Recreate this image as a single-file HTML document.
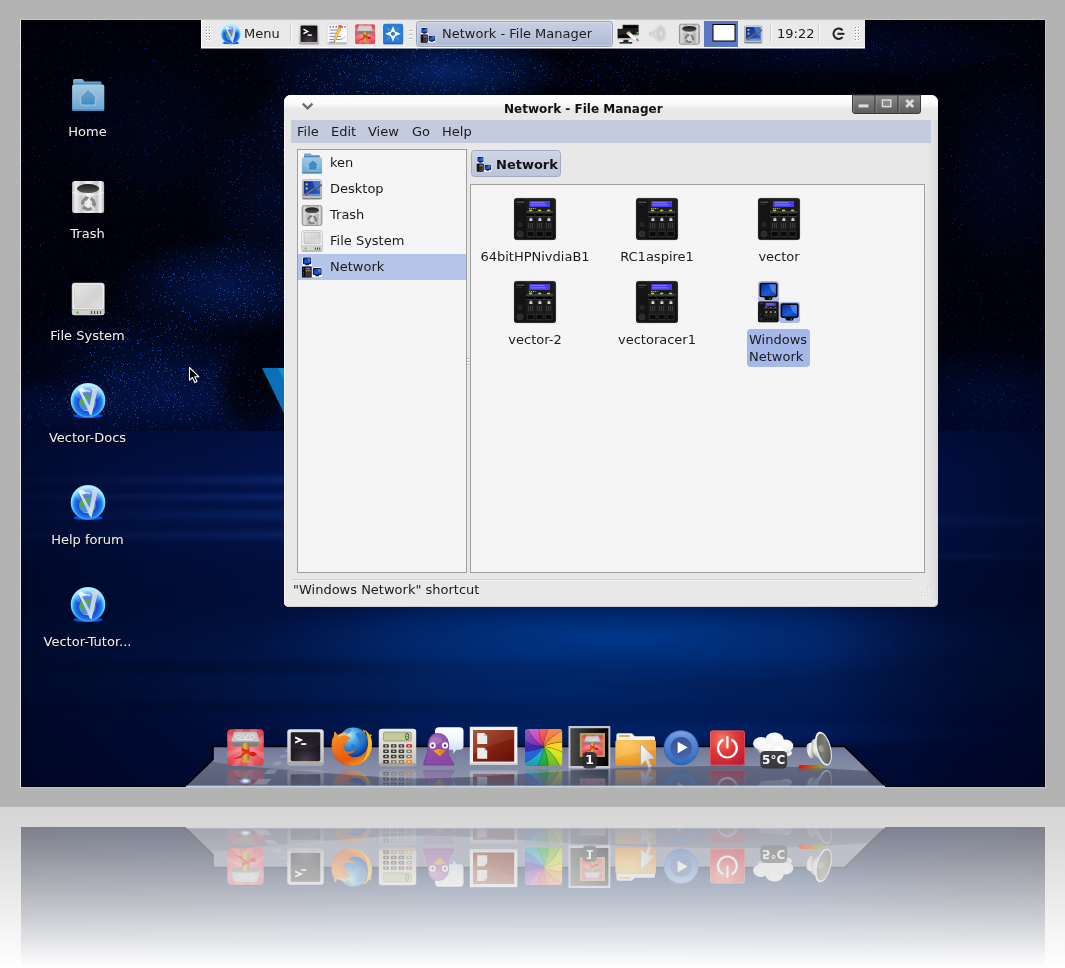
<!DOCTYPE html>
<html lang="en">
<head>
<meta charset="utf-8">
<title>Network - File Manager</title>
<style>
*{box-sizing:border-box}
html,body{margin:0;padding:0}
body{width:1065px;height:968px;overflow:hidden;position:relative;
 background:linear-gradient(to bottom,#b3b3b3 0,#b3b3b3 807px,#d6d6d6 807px,#dadada 840px,#ffffff 968px);
 font-family:"DejaVu Sans","Liberation Sans",sans-serif;font-size:13px;color:#1a1a1a}
#screen{position:absolute;left:21px;top:19px;width:1024px;height:768px;overflow:hidden;background:#00020c;
 -webkit-box-reflect:below 40px linear-gradient(to bottom,rgba(255,255,255,0) 0,rgba(255,255,255,0) 627px,rgba(255,255,255,0.42) 768px)}
#d{position:absolute;left:-21px;top:-19px;width:1065px;height:968px}
.abs{position:absolute}
svg{position:absolute;overflow:visible}
</style>
</head>
<body>
<div id="screen"><div id="d">
<svg width="0" height="0" style="position:absolute;left:0;top:0"><defs>
<!-- gradients -->
<radialGradient id="gOrb" cx="0.5" cy="0.56" r="0.5"><stop offset="0" stop-color="#2a3fc4"/><stop offset="0.55" stop-color="#1c48d4"/><stop offset="0.78" stop-color="#1d7cec"/><stop offset="0.93" stop-color="#5fd0ff"/><stop offset="1" stop-color="#8eeaff"/></radialGradient>
<linearGradient id="gOrbGloss" x1="0" y1="0" x2="0" y2="1"><stop offset="0" stop-color="#d8f4ff" stop-opacity="0.95"/><stop offset="1" stop-color="#a8c0ff" stop-opacity="0.15"/></linearGradient>
<linearGradient id="gSilver" x1="0" y1="0" x2="1" y2="1"><stop offset="0" stop-color="#ffffff"/><stop offset="0.5" stop-color="#c8d4e0"/><stop offset="1" stop-color="#f0f4f8"/></linearGradient>
<linearGradient id="gFolder" x1="0" y1="0" x2="0" y2="1"><stop offset="0" stop-color="#a4c9e2"/><stop offset="1" stop-color="#6aa6cf"/></linearGradient>
<linearGradient id="gFolderBack" x1="0" y1="0" x2="0" y2="1"><stop offset="0" stop-color="#8dbbdb"/><stop offset="0.450" stop-color="#6aa6d0"/><stop offset="0.600" stop-color="#3b86c0"/><stop offset="1" stop-color="#2f7cb8"/></linearGradient>
<linearGradient id="gHouse" x1="0" y1="0" x2="0" y2="1"><stop offset="0" stop-color="#6aa4cc"/><stop offset="1" stop-color="#3f8cc2"/></linearGradient>
<linearGradient id="gMetal" x1="0" y1="0" x2="1" y2="0"><stop offset="0" stop-color="#bdbdbd"/><stop offset="0.12" stop-color="#ededed"/><stop offset="0.3" stop-color="#c9c9c9"/><stop offset="0.5" stop-color="#f2f2f2"/><stop offset="0.78" stop-color="#c4c4c4"/><stop offset="0.88" stop-color="#f4f4f4"/><stop offset="1" stop-color="#b4b4b4"/></linearGradient>
<linearGradient id="gHole" x1="0" y1="0" x2="0" y2="1"><stop offset="0" stop-color="#1c1c1c"/><stop offset="1" stop-color="#5c5c5c"/></linearGradient>
<linearGradient id="gDrive" x1="0" y1="0" x2="0" y2="1"><stop offset="0" stop-color="#e4e4e4"/><stop offset="1" stop-color="#c2c2c2"/></linearGradient>
<linearGradient id="gDriveIn" x1="0" y1="0" x2="1" y2="1"><stop offset="0" stop-color="#e6e6e6"/><stop offset="0.6" stop-color="#d2d2d2"/><stop offset="1" stop-color="#e2e2e2"/></linearGradient>
<linearGradient id="gScreenB" x1="0" y1="0" x2="1" y2="1"><stop offset="0" stop-color="#0a2a9c"/><stop offset="0.6" stop-color="#1c5cd8"/><stop offset="1" stop-color="#0c38b0"/></linearGradient>
<linearGradient id="gDeskB" x1="0" y1="0" x2="1" y2="1"><stop offset="0" stop-color="#10288c"/><stop offset="1" stop-color="#2a62c8"/></linearGradient>
<linearGradient id="gSrv" x1="0" y1="0" x2="0" y2="1"><stop offset="0" stop-color="#2e2e2e"/><stop offset="0.08" stop-color="#1c1c1c"/><stop offset="1" stop-color="#0c0c0c"/></linearGradient>
<radialGradient id="gRed" cx="0.5" cy="0.5" r="0.7"><stop offset="0" stop-color="#f6a0a4"/><stop offset="0.6" stop-color="#ea5a64"/><stop offset="1" stop-color="#d83c48"/></radialGradient>
<linearGradient id="gHead" x1="0" y1="0" x2="0" y2="1"><stop offset="0" stop-color="#cfcfcf"/><stop offset="0.55" stop-color="#b8b8b8"/><stop offset="0.6" stop-color="#8e8e8e"/><stop offset="1" stop-color="#767676"/></linearGradient>
<linearGradient id="gWood" x1="0" y1="0" x2="1" y2="0"><stop offset="0" stop-color="#a87820"/><stop offset="0.4" stop-color="#e0b860"/><stop offset="1" stop-color="#9a6c18"/></linearGradient>
<radialGradient id="gTerm" cx="0.5" cy="1" r="0.8"><stop offset="0" stop-color="#4a4050"/><stop offset="0.6" stop-color="#221c26"/><stop offset="1" stop-color="#161218"/></radialGradient>
<linearGradient id="gFrame" x1="0" y1="0" x2="0" y2="1"><stop offset="0" stop-color="#e2e2e2"/><stop offset="1" stop-color="#bcbcbc"/></linearGradient>

<!-- Vector orb, 36x36 -->
<symbol id="orb" viewBox="0 0 36 36">
<ellipse cx="18" cy="33.4" rx="14.6" ry="2.5" fill="#0a4ee2"/>
<circle cx="18" cy="18" r="17.3" fill="url(#gOrb)"/>
<ellipse cx="18" cy="10.200" rx="13" ry="8.800" fill="url(#gOrbGloss)" opacity="0.780"/>
<circle cx="17.400" cy="20.800" r="8.400" fill="#4a8ee0"/>
<path d="M9.5 19 q2 -3 4 -1 q1 3 -1 5 q-2 1 -3 -4z M15 15 q3 -3 5 -1 q0 3 -3 4 q-2 0 -2 -3z M23 17 q2 0 2 3 q-1 2 -2 0z M22.5 23 q2 -1 2 1 q-1 2 -2 -1z M14 26 q2 0 3 1.5 q-2 1 -3 -1.5z" fill="#58b020"/>
<path d="M12 27.5 q5 2 10 -1 q-3 4 -10 1z" fill="#d8ecff" opacity="0.8"/>
<path d="M8.200 6.600 L11.500 5.200 L17.500 8.600 L12 10 L19.600 23.500 L22.600 7.600 L20.500 6.200 L29.400 5.400 L27.600 7.400 L23 27 L21.400 33.400 L19.400 31.500 L17.600 27 Z" fill="url(#gSilver)" opacity="0.940"/>
<path d="M13 10 q3.5 -3 7 -0.5" stroke="#e8eefc" stroke-width="1.3" fill="none" opacity="0.85"/>
</symbol>

<!-- Home folder 34x34 -->
<symbol id="homefolder" viewBox="0 0 34 34">
<path d="M3.5 1 h7.2 q1 0 1.6 1 l0.9 1.4 h15.8 q1.4 0 1.4 1.4 v4 h-28.4 v-6.3 q0 -1.5 1.5 -1.5z" fill="url(#gFolderBack)"/>
<rect x="1" y="6.4" width="32.2" height="26.6" rx="2" fill="url(#gFolder)"/>
<rect x="1" y="31.300" width="32.2" height="1.700" rx="0.800" fill="#3f88c0" opacity="0.850"/>
<path d="M17 11.2 L20.2 14.6 V12.6 H21.8 V16.2 L25.8 20.4 H24.2 V27 H9.8 V20.4 H8.2 Z" fill="url(#gHouse)" stroke="#bcd8ec" stroke-width="0.900" stroke-opacity="0.750"/>
</symbol>

<!-- small home folder 22x22 -->
<symbol id="homesm" viewBox="0 0 22 22">
<path d="M3 2.400 q0 -1.200 1.200 -1.200 h4.600 q0.900 0 1.400 0.800 l0.700 1 h6.800 q1.200 0 1.200 1.200 v2.800 h-15.900z" fill="url(#gFolderBack)"/>
<rect x="0.900" y="5.200" width="20.200" height="16.200" rx="1.600" fill="url(#gFolder)"/>
<rect x="0.900" y="20.200" width="20.200" height="1.200" rx="0.600" fill="#3a86c0" opacity="0.900"/>
<path d="M11.900 7.900 L13.900 9.900 V8.800 H15.100 V11.100 L18.300 13.500 H16.100 V18.400 H7.800 V13.500 H5.600 Z" fill="#3f8cc2" stroke="#b6d4ea" stroke-width="0.800" stroke-opacity="0.800"/>
</symbol>

<!-- Trash 34x34 -->
<symbol id="trash" viewBox="0 0 34 34">
<rect x="1" y="1" width="32" height="32" rx="2.5" fill="url(#gMetal)"/>
<path d="M1 12.5 q16 5 32 0" stroke="#ffffff" stroke-width="0.9" fill="none" opacity="0.7"/>
<ellipse cx="17" cy="8.6" rx="11.2" ry="4.5" fill="url(#gHole)"/>
<g fill="none" stroke="#8a8a8a" stroke-width="3.200">
<path d="M11.600 24.400 A5.600 5.600 0 0 1 15.400 18.200"/>
<path d="M19.400 18.400 A5.600 5.600 0 0 1 22.600 24.800"/>
<path d="M20.400 28.200 A5.600 5.600 0 0 1 13 27.600"/>
</g>
<path d="M13.600 15.800 l4.600 1.800 -3.200 3.400z M25.200 23 l-1.200 4.600 -3.600 -3z M11.200 29.800 l0.600 -4.800 3.800 2.800z" fill="#8a8a8a"/>
</symbol>

<!-- File system drive 34x34 -->
<symbol id="drive" viewBox="0 0 34 34">
<rect x="1" y="1" width="32.2" height="32" rx="2.6" fill="url(#gDrive)" stroke="#bdbdbd" stroke-width="0.600"/>
<rect x="1.4" y="1.4" width="31.4" height="26" rx="2.4" fill="#ececec"/>
<rect x="3.4" y="3.4" width="27.4" height="22.4" rx="1.6" fill="url(#gDriveIn)" stroke="#c4c4c4" stroke-width="0.6"/>
<rect x="1" y="27.6" width="32.2" height="5.4" rx="1.6" fill="#d0d0d0"/>
<rect x="1" y="27.4" width="32.2" height="0.8" fill="#a8a8a8" opacity="0.7"/>
<circle cx="6.4" cy="30.4" r="1.2" fill="#4cc030"/>
<path d="M19.8 29 h1.2 v3 h-1.2z M22.8 29 h1.2 v3 h-1.2z M25.8 29 h1.2 v3 h-1.2z M28.8 29 h1.2 v3 h-1.2z" fill="#4a4a4a"/>
</symbol>

<!-- small drive 22x22 -->
<symbol id="drivesm" viewBox="0 0 22 22">
<rect x="0.600" y="0.400" width="20.800" height="21.200" rx="2.400" fill="#f4f4f4" stroke="#b8b8b8" stroke-width="0.700"/>
<rect x="3" y="2.200" width="16.200" height="11.600" rx="1" fill="url(#gDriveIn)" stroke="#b0b0b0" stroke-width="0.700"/>
<path d="M0.800 15.800 h20.400 v3.600 q0 2 -2 2 h-16.400 q-2 0 -2 -2z" fill="#d6d6d6"/>
<rect x="0.800" y="15.600" width="20.400" height="0.700" fill="#b4b4b4"/>
<rect x="0.900" y="20.600" width="20.200" height="1" rx="0.500" fill="#9a9a9a" opacity="0.800"/>
<circle cx="4.600" cy="18.500" r="0.950" fill="#58c838"/>
<path d="M13.800 17.400 h1 v2.400 h-1z M16 17.400 h1 v2.400 h-1z M18.200 17.400 h1 v2.400 h-1z" fill="#3c3c3c"/>
</symbol>

<!-- user-desktop 20x20 -->
<symbol id="deskicon" viewBox="0 0 20 20">
<rect x="0.4" y="0.4" width="19" height="19" rx="2" fill="url(#gFrame)" stroke="#9c9c9c" stroke-width="0.700"/>
<rect x="0.400" y="18.200" width="19" height="1.300" rx="0.600" fill="#7e7e7e"/>
<rect x="1.900" y="1.900" width="16" height="14.300" fill="url(#gDeskB)"/>
<path d="M10.5 1.8 h7.5 v10 q-5 -1 -6 -6z" fill="#5a94e4" opacity="0.6"/>
<rect x="1.8" y="14.2" width="16.2" height="2.2" fill="#5c92e0"/>
<rect x="3.8" y="4" width="2" height="2" fill="#f0c040"/><rect x="3.8" y="8" width="2" height="2" fill="#e8c060"/>
<circle cx="4.6" cy="14.6" r="1.2" fill="#e03020"/><circle cx="5.4" cy="14" r="0.7" fill="#60c020"/>
<path d="M4.2 14 L19 4.6 L20 5.8 L5.5 14.6z" fill="#484848"/><path d="M4.2 14 L19 4.6 L19.4 5 L4.8 14.3z" fill="#9a9a9a"/>
</symbol>

<!-- server 48x48 (device body 42x42 at 3,3) -->
<symbol id="server" viewBox="0 0 48 48">
<rect x="3" y="3" width="42" height="42" rx="3" fill="url(#gSrv)"/>
<rect x="3.4" y="3.4" width="41.2" height="41.2" rx="2.8" fill="none" stroke="#3c3c3c" stroke-width="0.8"/>
<rect x="3.6" y="4" width="11.2" height="40" rx="2" fill="#141414"/>
<rect x="14.8" y="4.4" width="29.2" height="12.6" fill="#1b1b1b"/>
<rect x="5.4" y="6.6" width="8" height="1.2" fill="#5a5a5a"/>
<rect x="5.4" y="9.4" width="5" height="0.6" fill="#3a3a3a"/>
<rect x="18.2" y="6" width="20.8" height="6" fill="#4a3cf4"/>
<rect x="19.6" y="7.2" width="14" height="0.9" fill="#8a84ff"/><rect x="19.6" y="9.4" width="15.6" height="0.9" fill="#8a84ff"/>
<circle cx="18.6" cy="13.5" r="0.7" fill="#90d020"/><circle cx="20.6" cy="13.5" r="0.7" fill="#e09020"/><circle cx="22.6" cy="13.5" r="0.7" fill="#90d020"/><circle cx="24.6" cy="13.5" r="0.7" fill="#e04020"/>
<ellipse cx="19.6" cy="15.5" rx="1.8" ry="0.9" fill="#a0e010"/><ellipse cx="28.6" cy="15.5" rx="1.8" ry="0.9" fill="#a0e010"/><ellipse cx="37.6" cy="15.5" rx="1.8" ry="0.9" fill="#a0e010"/>
<rect x="15" y="16.4" width="27.4" height="1.1" fill="#5c5c5c"/>
<rect x="15.4" y="18" width="8.4" height="25" fill="#1d1d1d"/><rect x="24.4" y="18" width="8.4" height="25" fill="#1d1d1d"/><rect x="33.4" y="18" width="8.4" height="25" fill="#1d1d1d"/>
<rect x="16" y="19" width="7.2" height="2" fill="#000"/><rect x="25" y="19" width="7.2" height="2" fill="#000"/><rect x="34" y="19" width="7.2" height="2" fill="#000"/>
<rect x="15.4" y="21.4" width="26.4" height="0.6" fill="#4a4a4a"/>
<path d="M18.4 23.6 h1 v-1 h1 v1 h1 v2.4 h-3z M27.4 23.6 h1 v-1 h1 v1 h1 v2.4 h-3z M36.4 23.6 h1 v-1 h1 v1 h1 v2.4 h-3z" fill="#d2d2d2"/>
<g stroke="#565656" stroke-width="0.6"><path d="M17.6 28 v5 M19.6 28 v5 M21.6 28 v5 M26.6 28 v5 M28.6 28 v5 M30.6 28 v5 M35.6 28 v5 M37.6 28 v5 M39.6 28 v5"/></g>
<rect x="16.2" y="36.6" width="6.8" height="4.6" fill="#0a0a0a" stroke="#3c3c3c" stroke-width="0.5"/><rect x="25.2" y="36.6" width="6.8" height="4.6" fill="#0a0a0a" stroke="#3c3c3c" stroke-width="0.5"/><rect x="34.2" y="36.6" width="6.8" height="4.6" fill="#0a0a0a" stroke="#3c3c3c" stroke-width="0.5"/>
<circle cx="9" cy="29.5" r="2" fill="#222" stroke="#3a3a3a" stroke-width="0.6"/>
<circle cx="9" cy="39" r="3" fill="#2c2c2c" stroke="#3e3e3e" stroke-width="0.6"/>
</symbol>

<!-- monitor 22x22 -->
<symbol id="mon" viewBox="0 0 22 22">
<rect x="0.2" y="0.2" width="21.6" height="21.600" rx="3.600" style="fill:var(--mb,#fff)"/>
<path d="M4 1.900 h14 q2.200 0 2.200 2.200 v10.400 q0 2.200 -2.200 2.200 h-2.400 l-1.400 2.700 h-6.400 l-1.400 -2.700 h-2.400 q-2.200 0 -2.200 -2.200 v-10.400 q0 -2.200 2.200 -2.200z" fill="#080808"/>
<rect x="3.500" y="3.500" width="15" height="11.800" rx="0.800" fill="url(#gScreenB)"/>
<path d="M11.500 3.500 h7 v10 q-4.600 -2 -7 -10z" fill="#7ab4ff" opacity="0.450"/>
<circle cx="12.600" cy="17.900" r="0.700" fill="#70e020"/>
</symbol>

<!-- network group 44x44 -->
<symbol id="netgrp" viewBox="0 0 44 44">
<use href="#mon" x="0.5" y="0.5" width="22" height="22"/>
<use href="#mon" x="22" y="21.5" width="22" height="22"/>
<g transform="translate(-0.6,20) scale(0.5)"><use href="#server" x="0" y="0" width="48" height="48"/></g>
</symbol>

<!-- small network 22x22 -->
<symbol id="netsm" viewBox="0 0 22 22">
<use href="#mon" x="1.200" y="0.700" width="9.800" height="9.800"/>
<use href="#mon" x="11" y="11.200" width="10.400" height="10.400"/>
<rect x="1" y="10.400" width="9.600" height="11.200" rx="1.200" fill="#0c0c0c"/>
<rect x="4.600" y="11.700" width="4.800" height="1.900" fill="#7a5cff"/>
<path d="M4.700 14.300 h1.300 v1.200 h-1.300z M6.500 14.300 h1.300 v1.200 h-1.300z M8.300 14.300 h1.300 v1.200 h-1.300z" fill="#c4e020"/>
<path d="M4.700 16.200 h1.300 v4.600 h-1.300z M6.500 16.200 h1.300 v4.600 h-1.300z M8.300 16.200 h1.300 v4.600 h-1.300z" fill="#4c4c4c"/>
<path d="M2 12.200 h1 v1 h-1z M2 16.200 h1 v1 h-1z M2 18.600 h1 v1 h-1z" fill="#5a5a5a"/>
</symbol>

<!-- hammer app icon 38x38 -->
<symbol id="hammer" viewBox="0 0 38 38">
<rect x="0.5" y="0.5" width="37" height="37" rx="4" fill="url(#gRed)"/>
<g fill="#fff" opacity="0.16"><path d="M19 19 L0 4 V12z M19 19 L8 0 H16z M19 19 L24 0 H32z M19 19 L38 6 V14z M19 19 L38 24 V31z M19 19 L28 38 H21z M19 19 L12 38 H5z M19 19 L0 30 V23z"/></g>
<path d="M7.600 3.600 h22.600 l2.800 8.400 v3.400 l-2.400 2.600 h-23.400 l-2.400 -2.600 v-3.400z" fill="url(#gHead)"/>
<path d="M7.600 3.600 h22.600 l2.800 8.400 h-28.200z" fill="#c6c6c6"/>
<path d="M8.600 8 l3 -2.400 3 2.400 -3 2.400z M15.500 5 l3.400 5 3.400 -5 M22.800 8 l3 -2.400 3 2.400 -3 2.400z M12 10.800 h14" stroke="#f6f6f6" stroke-width="0.900" fill="none" opacity="0.850"/>
<path d="M5.400 12 h28 v1 h-28z" fill="#f2f2f2" opacity="0.700"/>
<path d="M5.600 30.600 q6.400 -1.400 10.600 -5.600 l1.600 3 q-5.400 3.400 -12.200 2.600z" fill="#e41c0c"/>
<path d="M22.600 24.400 q5.400 -2.800 8.200 1.800 q-3 3 -7.600 0.600z" fill="#d81c10"/>
<rect x="15.200" y="14.400" width="7.800" height="20" rx="3.400" fill="url(#gWood)"/>
<path d="M15.200 19.200 l7.800 3.400 v3.200 l-7.800 -3.400z M15.200 25.400 l7.800 -5.400 v2.800 l-7.800 5.400z" fill="#f02810"/>
<ellipse cx="19.100" cy="32.600" rx="3.600" ry="1.800" fill="#caa044"/>
</symbol>

<!-- terminal 38x38 -->
<symbol id="term" viewBox="0 0 38 38">
<rect x="0.5" y="0.5" width="37" height="37" rx="3" fill="url(#gFrame)"/>
<rect x="0.5" y="34" width="37" height="3.5" rx="1.700" fill="#9c9c9c" opacity="0.6"/>
<rect x="4" y="3.600" width="30" height="29.400" rx="1.500" fill="url(#gTerm)"/>
<path d="M4 3.600 h30 v13 q-15 6 -30 3z" fill="#fff" opacity="0.05"/>
<path d="M8.400 8.800 l6 2.600 -6 2.600" stroke="#fff" stroke-width="1.900" fill="none"/>
<rect x="14.600" y="14.600" width="5.200" height="1.800" fill="#fff"/>
</symbol>
</defs></svg>
<!-- wallpaper -->
<div class="abs" style="left:21px;top:19px;width:1024px;height:412px;background:radial-gradient(ellipse 40px 44px at 231px 369px,rgba(0,1,8,.9) 0,rgba(0,1,8,.75) 55%,rgba(0,1,8,0) 100%),radial-gradient(ellipse 170px 42px at 154px 379px,rgba(3,20,74,0.8) 0,rgba(3,20,74,0.44) 50%,rgba(3,20,74,0) 100%),radial-gradient(ellipse 110px 30px at 39px 393px,rgba(3,16,62,0.55) 0,rgba(3,16,62,0.30) 50%,rgba(3,16,62,0) 100%),radial-gradient(ellipse 115px 52px at 204px 269px,rgba(4,24,84,0.85) 0,rgba(4,24,84,0.47) 50%,rgba(4,24,84,0) 100%),radial-gradient(ellipse 75px 95px at 249px 181px,rgba(3,16,60,0.55) 0,rgba(3,16,60,0.30) 50%,rgba(3,16,60,0) 100%),radial-gradient(ellipse 90px 50px at 89px 321px,rgba(2,12,48,0.45) 0,rgba(2,12,48,0.25) 50%,rgba(2,12,48,0) 100%),radial-gradient(ellipse 100px 55px at 139px 349px,rgba(3,18,66,0.7) 0,rgba(3,18,66,0.39) 50%,rgba(3,18,66,0) 100%),radial-gradient(ellipse 120px 42px at 424px 53px,rgba(6,34,104,0.95) 0,rgba(6,34,104,0.52) 50%,rgba(6,34,104,0) 100%),radial-gradient(ellipse 90px 60px at 314px 101px,rgba(4,22,76,0.7) 0,rgba(4,22,76,0.39) 50%,rgba(4,22,76,0) 100%),radial-gradient(ellipse 80px 40px at 309px 41px,rgba(3,18,66,0.6) 0,rgba(3,18,66,0.33) 50%,rgba(3,18,66,0) 100%),radial-gradient(ellipse 230px 34px at 799px 29px,rgba(2,12,52,0.7) 0,rgba(2,12,52,0.39) 50%,rgba(2,12,52,0) 100%),radial-gradient(ellipse 110px 32px at 589px 51px,rgba(1,6,30,0.3) 0,rgba(1,6,30,0.17) 50%,rgba(1,6,30,0) 100%),radial-gradient(ellipse 70px 110px at 984px 151px,rgba(2,10,44,0.6) 0,rgba(2,10,44,0.33) 50%,rgba(2,10,44,0) 100%),radial-gradient(ellipse 90px 45px at 964px 376px,rgba(2,12,50,0.7) 0,rgba(2,12,50,0.39) 50%,rgba(2,12,50,0) 100%),radial-gradient(ellipse 120px 90px at 129px 111px,rgba(2,9,40,0.45) 0,rgba(2,9,40,0.25) 50%,rgba(2,9,40,0) 100%),linear-gradient(to bottom,#00010a 0,#00010a 75%,#010626 100%)"></div>
<svg style="left:0;top:0" width="1065" height="440" viewBox="0 0 1065 440" shape-rendering="crispEdges"><path d="M117 144.5h1M889 19.5h1M797 67.5h1M948 217.5h1M965 268.5h1M51 344.5h1M53 310.5h1M181 237.5h1M120 152.5h1M84 293.5h1M1030 275.5h1M127 154.5h1M34 54.5h1M63 42.5h1M996 98.5h1M1011 297.5h1M977 121.5h1M198 90.5h1M44 143.5h1M1037 181.5h1M1025 177.5h1M113 258.5h1M974 104.5h1M41 87.5h1M56 300.5h1M198 191.5h1M161 147.5h1M1009 317.5h1M957 77.5h1M795 63.5h1M60 276.5h1M957 85.5h1M974 195.5h1M1032 310.5h1M1040 205.5h1M775 78.5h1M148 79.5h1M97 138.5h1M90 130.5h1M988 56.5h1M63 213.5h1M1026 74.5h1M1036 408.5h1M977 282.5h1M650 91.5h1M182 228.5h1M751 66.5h1M153 84.5h1M941 414.5h1M125 245.5h1M81 262.5h1M92 138.5h1M1004 94.5h1M203 158.5h1M1014 64.5h1M875 59.5h1M949 396.5h1M990 188.5h1M38 49.5h1M1044 285.5h1M946 271.5h1M83 47.5h1M997 139.5h1M1044 399.5h1M259 415.5h1M977 223.5h1M570 49.5h1M254 77.5h1M202 43.5h1M135 78.5h1M917 27.5h1M127 189.5h1M194 70.5h1M194 87.5h1M813 87.5h1M1044 273.5h1M961 291.5h1M998 337.5h1M158 251.5h1M1033 125.5h1M257 409.5h1M144 195.5h1M981 102.5h1M749 57.5h1M127 189.5h1M963 102.5h1M1021 41.5h1M197 159.5h1M1044 157.5h1M240 420.5h1M109 232.5h1M1002 110.5h1M84 198.5h1M61 319.5h1M129 185.5h1M36 249.5h1M1003 94.5h1M958 104.5h1M799 87.5h1M829 66.5h1M948 376.5h1M30 286.5h1M1033 152.5h1M796 60.5h1M914 82.5h1M37 206.5h1M972 288.5h1M983 252.5h1M1023 410.5h1M1019 148.5h1M119 179.5h1M1015 123.5h1M1041 216.5h1M116 80.5h1M64 322.5h1M72 231.5h1M814 84.5h1M125 249.5h1M1025 288.5h1M1041 329.5h1M123 40.5h1M1018 153.5h1M1012 95.5h1M908 52.5h1M151 121.5h1M153 240.5h1M156 106.5h1M937 392.5h1M980 298.5h1M996 355.5h1M110 166.5h1M1035 375.5h1M28 70.5h1M188 72.5h1M952 330.5h1M90 318.5h1M1013 107.5h1M1010 181.5h1M953 407.5h1M870 89.5h1M852 83.5h1M944 304.5h1M969 293.5h1M171 81.5h1M278 425.5h1M79 309.5h1M995 368.5h1M881 36.5h1M56 290.5h1M900 90.5h1M958 289.5h1M185 108.5h1M939 359.5h1M82 119.5h1M984 215.5h1M28 337.5h1M236 91.5h1M983 151.5h1M209 188.5h1M767 61.5h1M114 235.5h1M860 72.5h1M937 321.5h1M87 314.5h1M77 97.5h1M38 55.5h1M197 105.5h1M159 184.5h1M187 206.5h1M107 41.5h1M993 57.5h1M51 268.5h1M278 399.5h1M267 410.5h1M109 80.5h1M205 110.5h1M969 147.5h1M971 179.5h1M981 300.5h1M888 33.5h1M60 93.5h1M65 101.5h1M26 128.5h1M969 126.5h1M147 162.5h1M180 122.5h1M73 130.5h1M256 47.5h1M893 65.5h1M267 412.5h1M94 258.5h1M160 130.5h1M124 115.5h1M177 158.5h1M115 127.5h1M1017 371.5h1M960 365.5h1M39 331.5h1M975 186.5h1M123 180.5h1M999 288.5h1M1025 88.5h1M198 199.5h1M164 229.5h1M81 122.5h1M174 226.5h1M158 250.5h1M937 211.5h1M1034 242.5h1M56 63.5h1M108 42.5h1M817 77.5h1M43 284.5h1M138 95.5h1M240 85.5h1M101 187.5h1M54 191.5h1M84 200.5h1M160 194.5h1M182 95.5h1M76 105.5h1M1043 122.5h1M88 21.5h1M938 414.5h1M149 243.5h1M1004 353.5h1M27 110.5h1M902 63.5h1M183 235.5h1M988 183.5h1M162 90.5h1M101 133.5h1M181 234.5h1M984 260.5h1M214 152.5h1M50 149.5h1M43 242.5h1M747 67.5h1M1045 257.5h1M984 97.5h1M959 290.5h1M1021 125.5h1M21 384.5h1M42 313.5h1M48 323.5h1M133 102.5h1M30 315.5h1M1034 266.5h1M162 48.5h1M974 161.5h1M1022 415.5h1M50 128.5h1M1040 328.5h1M944 278.5h1M171 28.5h1M42 159.5h1M1031 404.5h1M732 50.5h1M165 96.5h1M116 103.5h1M956 316.5h1M98 165.5h1M90 277.5h1M114 153.5h1M989 30.5h1M712 55.5h1M885 33.5h1M116 186.5h1M1018 114.5h1M150 178.5h1M115 236.5h1M243 365.5h1M151 229.5h1M161 212.5h1M972 71.5h1M992 219.5h1M979 360.5h1M853 63.5h1M64 231.5h1M995 156.5h1M990 89.5h1M1032 429.5h1M31 283.5h1M75 58.5h1M981 195.5h1M50 161.5h1M94 206.5h1M95 152.5h1M949 244.5h1M79 73.5h1M70 100.5h1M24 274.5h1M32 152.5h1M980 120.5h1M1007 167.5h1M112 199.5h1M741 59.5h1M204 152.5h1M1009 235.5h1M76 258.5h1M744 72.5h1M979 230.5h1M146 190.5h1M780 60.5h1M994 36.5h1M193 59.5h1M774 61.5h1M1003 151.5h1M168 28.5h1M146 154.5h1M990 208.5h1M996 293.5h1M208 77.5h1M265 74.5h1M199 186.5h1M193 174.5h1M895 94.5h1M1015 345.5h1M745 93.5h1M1024 413.5h1M33 148.5h1M54 218.5h1M87 108.5h1M185 106.5h1M971 39.5h1M65 275.5h1M986 241.5h1M81 151.5h1M70 202.5h1M618 93.5h1M237 68.5h1M730 49.5h1M180 89.5h1M242 368.5h1M962 294.5h1M134 127.5h1M106 284.5h1M950 108.5h1M90 308.5h1M881 90.5h1M1032 120.5h1M853 63.5h1M954 61.5h1M1038 202.5h1M54 232.5h1M42 167.5h1M951 36.5h1M267 346.5h1M899 72.5h1M980 41.5h1M25 67.5h1M1015 210.5h1M1017 415.5h1M774 60.5h1M159 109.5h1M1004 167.5h1M652 96.5h1M53 93.5h1M1007 135.5h1M1029 95.5h1M63 364.5h1M988 122.5h1M992 194.5h1M992 238.5h1M819 64.5h1M940 241.5h1M987 254.5h1M110 78.5h1M971 236.5h1M89 35.5h1M982 191.5h1M957 339.5h1M969 161.5h1M623 91.5h1M1021 113.5h1M1034 152.5h1M821 80.5h1M751 78.5h1M170 129.5h1M1026 389.5h1M792 76.5h1M948 421.5h1M72 182.5h1M988 193.5h1M1001 35.5h1M171 93.5h1M587 48.5h1M983 426.5h1M867 25.5h1M249 413.5h1M72 314.5h1M1026 136.5h1M199 137.5h1M24 246.5h1M966 49.5h1" stroke="#071640" stroke-width="1" fill="none"/><path d="M873 45.5h1M215 335.5h1M284 184.5h1M880 49.5h1M628 56.5h1M242 162.5h1M252 139.5h1M248 400.5h1M234 182.5h1M264 121.5h1M132 425.5h1M151 426.5h1M274 189.5h1M624 89.5h1M87 358.5h1M221 170.5h1M283 109.5h1M271 108.5h1M98 428.5h1M74 359.5h1M261 218.5h1M604 59.5h1M272 320.5h1M252 167.5h1M623 56.5h1M235 322.5h1M322 57.5h1M211 356.5h1M203 253.5h1M645 72.5h1M224 162.5h1M665 50.5h1M598 76.5h1M959 389.5h1M549 78.5h1M229 147.5h1M324 61.5h1M267 238.5h1M656 61.5h1M163 261.5h1M91 334.5h1M251 320.5h1M1003 394.5h1M229 193.5h1M230 367.5h1M502 93.5h1M625 61.5h1M151 309.5h1M293 94.5h1M200 254.5h1M167 252.5h1M266 172.5h1M81 360.5h1M240 141.5h1M241 153.5h1M612 90.5h1M135 276.5h1M184 257.5h1M623 86.5h1M240 149.5h1M688 71.5h1M226 364.5h1M645 66.5h1M586 80.5h1M221 391.5h1M142 307.5h1M75 343.5h1M273 94.5h1M82 323.5h1M232 184.5h1M221 427.5h1M191 254.5h1M133 313.5h1M207 339.5h1M89 330.5h1M159 267.5h1M828 52.5h1M629 65.5h1M982 392.5h1M206 255.5h1M784 56.5h1M244 229.5h1M227 192.5h1M237 197.5h1M275 216.5h1M78 344.5h1M126 427.5h1M218 157.5h1M234 379.5h1M867 49.5h1M975 396.5h1M321 54.5h1M148 328.5h1M503 96.5h1M274 221.5h1M220 349.5h1M691 66.5h1M265 215.5h1M983 406.5h1M541 80.5h1M620 54.5h1M815 47.5h1M610 77.5h1M142 303.5h1M326 54.5h1M221 427.5h1M251 206.5h1M623 70.5h1M832 51.5h1M202 419.5h1M256 195.5h1M94 319.5h1M748 53.5h1M279 156.5h1M211 329.5h1M127 320.5h1M285 72.5h1M565 79.5h1M110 428.5h1M258 198.5h1M293 54.5h1M117 427.5h1M133 326.5h1M228 242.5h1M258 214.5h1M293 86.5h1M237 332.5h1M285 238.5h1M571 63.5h1M162 427.5h1M125 295.5h1M229 160.5h1M265 132.5h1M531 91.5h1M873 49.5h1M279 202.5h1M577 86.5h1M78 427.5h1M540 57.5h1M539 53.5h1M954 395.5h1M636 66.5h1M677 73.5h1M264 113.5h1M263 173.5h1M629 72.5h1M578 72.5h1M98 332.5h1M994 390.5h1M241 188.5h1M147 317.5h1M24 409.5h1M263 211.5h1M999 403.5h1M561 85.5h1M245 412.5h1M194 337.5h1M284 419.5h1M117 425.5h1M286 315.5h1M229 396.5h1M674 79.5h1M213 173.5h1M687 52.5h1M46 425.5h1M255 400.5h1M623 56.5h1M664 49.5h1M207 331.5h1M26 394.5h1M191 256.5h1M246 229.5h1M222 430.5h1M250 326.5h1M153 300.5h1M278 196.5h1M593 55.5h1M598 85.5h1M245 200.5h1M246 235.5h1M277 190.5h1M124 319.5h1M99 335.5h1M319 49.5h1M258 181.5h1M113 426.5h1M44 422.5h1M313 56.5h1M249 405.5h1M121 329.5h1M853 53.5h1M239 234.5h1M276 234.5h1M271 244.5h1M682 58.5h1M237 178.5h1M186 338.5h1M595 50.5h1M226 399.5h1M142 276.5h1M208 322.5h1M1007 384.5h1M230 140.5h1M566 81.5h1M272 323.5h1M200 247.5h1M618 72.5h1M232 354.5h1M286 69.5h1M650 70.5h1M70 382.5h1M225 140.5h1M277 221.5h1M271 100.5h1M50 386.5h1M231 427.5h1M291 92.5h1M628 67.5h1M667 79.5h1M222 203.5h1M282 316.5h1M31 427.5h1M229 181.5h1M1017 397.5h1M682 63.5h1M875 56.5h1M260 111.5h1M580 62.5h1M217 325.5h1M260 402.5h1M869 58.5h1M238 215.5h1M130 311.5h1M979 397.5h1M634 88.5h1M211 430.5h1M589 71.5h1M686 62.5h1M192 428.5h1M157 262.5h1M215 348.5h1M243 397.5h1M628 85.5h1M574 84.5h1M267 190.5h1M228 381.5h1M149 281.5h1" stroke="#0c2860" stroke-width="1" fill="none"/><path d="M975 53.5h1M1030 237.5h1M763 91.5h1M922 60.5h1M1001 28.5h1M1042 220.5h1M976 284.5h1M953 281.5h1M271 429.5h1M102 298.5h1M818 65.5h1M22 244.5h1M202 62.5h1M882 36.5h1M73 308.5h1M44 162.5h1M1035 180.5h1M29 291.5h1M191 128.5h1M958 159.5h1M1029 271.5h1M1030 395.5h1M53 333.5h1M157 198.5h1M1009 103.5h1M87 124.5h1M1026 64.5h1M101 191.5h1M813 70.5h1M1035 426.5h1M798 77.5h1M57 176.5h1M77 185.5h1M968 174.5h1M95 174.5h1M75 219.5h1M1004 252.5h1M956 167.5h1M38 356.5h1M162 119.5h1M1003 416.5h1M180 241.5h1M1032 177.5h1M891 70.5h1M1035 153.5h1M103 134.5h1M112 149.5h1M1026 40.5h1M1014 70.5h1M243 350.5h1M870 93.5h1M1015 124.5h1M144 48.5h1M143 194.5h1M894 75.5h1M81 253.5h1M945 212.5h1M164 73.5h1M230 107.5h1M60 68.5h1M228 77.5h1M179 38.5h1M918 88.5h1M911 55.5h1M78 319.5h1M653 88.5h1M251 58.5h1M259 373.5h1M972 144.5h1M1012 335.5h1M964 114.5h1M1033 428.5h1M106 26.5h1M263 387.5h1M49 72.5h1M258 67.5h1M979 333.5h1M160 143.5h1M991 149.5h1M250 419.5h1M41 86.5h1M969 213.5h1M962 424.5h1M66 331.5h1M745 56.5h1M205 135.5h1M945 127.5h1M45 294.5h1M996 375.5h1M160 71.5h1M972 414.5h1M1021 399.5h1M1040 382.5h1M157 131.5h1M995 169.5h1M117 135.5h1M972 264.5h1M973 78.5h1M64 27.5h1M98 255.5h1M1006 424.5h1M991 202.5h1M232 420.5h1M132 266.5h1M965 245.5h1M1027 140.5h1M98 286.5h1M147 155.5h1M546 50.5h1M972 230.5h1M114 296.5h1M1043 315.5h1M130 48.5h1M980 304.5h1M910 74.5h1M594 47.5h1M971 197.5h1M96 262.5h1M115 179.5h1M92 265.5h1M957 211.5h1M1008 156.5h1M971 430.5h1M977 293.5h1M1023 156.5h1M143 234.5h1M29 95.5h1M153 95.5h1M1041 138.5h1M988 323.5h1M906 59.5h1M27 230.5h1M973 241.5h1M968 414.5h1M221 100.5h1M239 99.5h1M968 200.5h1M255 370.5h1M577 95.5h1M946 404.5h1M1036 242.5h1M125 199.5h1M1036 46.5h1M199 87.5h1M25 313.5h1M167 83.5h1M125 170.5h1M1022 91.5h1M999 201.5h1M114 161.5h1M1007 422.5h1M87 189.5h1M67 103.5h1M888 21.5h1M56 371.5h1M40 314.5h1M988 69.5h1M178 222.5h1M60 43.5h1M43 294.5h1M176 152.5h1M951 358.5h1M994 246.5h1M937 405.5h1M925 28.5h1M134 114.5h1M1011 120.5h1M990 354.5h1M973 37.5h1M75 326.5h1M96 180.5h1M40 126.5h1M137 135.5h1M1039 420.5h1M1020 150.5h1M39 156.5h1M1041 362.5h1M217 71.5h1M60 123.5h1M1002 154.5h1M99 68.5h1M719 51.5h1M133 154.5h1M137 262.5h1M996 313.5h1M225 57.5h1M996 147.5h1M76 216.5h1M801 71.5h1M1014 323.5h1M131 245.5h1M122 80.5h1M952 59.5h1M1014 187.5h1M129 114.5h1M959 54.5h1M52 101.5h1M1010 166.5h1M163 208.5h1M53 350.5h1M106 132.5h1M143 116.5h1M961 222.5h1M189 150.5h1M31 227.5h1M1036 339.5h1M157 117.5h1M953 47.5h1M105 281.5h1M949 42.5h1M139 22.5h1M165 191.5h1M1039 214.5h1M1015 185.5h1M994 203.5h1M22 21.5h1M77 144.5h1M958 115.5h1M981 302.5h1M31 322.5h1M729 86.5h1M40 245.5h1M255 352.5h1M26 328.5h1M959 301.5h1M275 404.5h1M192 178.5h1M273 49.5h1M779 66.5h1M917 78.5h1M846 62.5h1M1033 203.5h1M271 93.5h1M993 218.5h1M191 157.5h1M162 139.5h1M77 39.5h1M1043 123.5h1M274 384.5h1M112 305.5h1M257 77.5h1M937 337.5h1M968 280.5h1M121 74.5h1M927 73.5h1M760 61.5h1M151 35.5h1M974 344.5h1M108 119.5h1M1033 230.5h1M201 210.5h1M912 76.5h1M920 76.5h1M910 93.5h1M1005 130.5h1M111 212.5h1M210 49.5h1M954 190.5h1M278 351.5h1M1000 366.5h1M946 376.5h1M90 54.5h1M948 369.5h1M950 149.5h1M1013 64.5h1M948 166.5h1M154 60.5h1M181 110.5h1M205 149.5h1M715 85.5h1M46 430.5h1M1025 64.5h1M73 244.5h1M40 350.5h1M1025 113.5h1M961 111.5h1M86 247.5h1M939 384.5h1M99 19.5h1M1032 175.5h1M942 51.5h1M1041 27.5h1M122 242.5h1M872 86.5h1M77 289.5h1M1037 57.5h1M933 95.5h1M1041 214.5h1M951 155.5h1M978 176.5h1M943 34.5h1M101 300.5h1M943 289.5h1M978 188.5h1M62 19.5h1M967 88.5h1M963 191.5h1M983 118.5h1M972 341.5h1M143 204.5h1M121 173.5h1M51 341.5h1M1015 240.5h1M957 342.5h1M252 413.5h1M996 255.5h1M162 133.5h1M1032 20.5h1M236 79.5h1M102 128.5h1M995 361.5h1M242 64.5h1M217 141.5h1M187 68.5h1M948 376.5h1M818 66.5h1M986 255.5h1M103 32.5h1M922 40.5h1M1038 84.5h1M209 114.5h1M943 297.5h1M966 109.5h1M65 279.5h1M908 67.5h1M229 123.5h1M105 300.5h1M1041 411.5h1M128 150.5h1M1007 272.5h1M43 298.5h1M975 238.5h1M51 330.5h1M48 318.5h1M979 322.5h1M1010 31.5h1M997 110.5h1M199 203.5h1M188 46.5h1M120 101.5h1M99 164.5h1M23 375.5h1M118 316.5h1M170 155.5h1M1005 253.5h1M1010 87.5h1M978 220.5h1M1041 370.5h1M1016 418.5h1M222 123.5h1M166 125.5h1M195 64.5h1M177 170.5h1M62 54.5h1M282 358.5h1M921 62.5h1M1041 182.5h1M719 61.5h1M71 43.5h1M992 101.5h1M236 71.5h1M940 27.5h1M68 70.5h1M92 158.5h1M876 63.5h1M654 89.5h1M155 158.5h1M85 27.5h1M64 79.5h1M111 42.5h1M966 188.5h1M1034 88.5h1M173 210.5h1M91 196.5h1M1007 186.5h1M1009 341.5h1M945 293.5h1" stroke="#091c4e" stroke-width="1" fill="none"/><path d="M598 63.5h1M634 49.5h1M128 320.5h1M642 83.5h1M593 81.5h1M95 425.5h1M988 388.5h1M129 324.5h1M228 161.5h1M258 329.5h1M50 423.5h1M592 68.5h1M226 350.5h1M615 71.5h1M238 375.5h1M790 58.5h1M141 295.5h1M263 177.5h1M233 164.5h1M836 51.5h1M232 151.5h1M645 67.5h1M512 54.5h1M643 79.5h1M241 205.5h1M253 230.5h1M236 229.5h1M328 52.5h1M54 383.5h1M675 70.5h1M143 315.5h1M1003 393.5h1M226 160.5h1M128 313.5h1M534 89.5h1M249 148.5h1M983 388.5h1M242 170.5h1M641 59.5h1M578 64.5h1M881 48.5h1M267 135.5h1M240 174.5h1M971 380.5h1M272 58.5h1M180 336.5h1M223 410.5h1M166 253.5h1M662 71.5h1M226 332.5h1M569 69.5h1M242 241.5h1M133 322.5h1M609 68.5h1M222 172.5h1M292 91.5h1M220 345.5h1M142 318.5h1M226 355.5h1M255 152.5h1M319 56.5h1M123 329.5h1M583 56.5h1M227 420.5h1M288 65.5h1M637 70.5h1M251 188.5h1M70 421.5h1M136 297.5h1M226 173.5h1M108 334.5h1M247 319.5h1M228 171.5h1M570 71.5h1M187 425.5h1M270 422.5h1M997 398.5h1M214 162.5h1M143 320.5h1M757 54.5h1M198 249.5h1M90 347.5h1M622 78.5h1M335 54.5h1M268 177.5h1M248 148.5h1M818 52.5h1M233 392.5h1M856 48.5h1M169 421.5h1M248 380.5h1M282 411.5h1M229 242.5h1M62 378.5h1M613 72.5h1M211 329.5h1M740 49.5h1M253 174.5h1M678 49.5h1M132 326.5h1M701 65.5h1M705 58.5h1M77 424.5h1M155 307.5h1M237 404.5h1M277 86.5h1M773 51.5h1M998 387.5h1M271 101.5h1M265 182.5h1M524 47.5h1M73 333.5h1M341 47.5h1M623 90.5h1M741 52.5h1M651 80.5h1M241 146.5h1M204 251.5h1M130 306.5h1M270 218.5h1M597 52.5h1M228 237.5h1M219 159.5h1M185 253.5h1M87 327.5h1M160 422.5h1M281 222.5h1M286 96.5h1M242 140.5h1M972 392.5h1M260 159.5h1M216 329.5h1M592 64.5h1M1014 386.5h1M982 399.5h1M102 327.5h1M345 50.5h1M218 421.5h1M832 54.5h1M984 395.5h1M288 95.5h1M205 337.5h1M147 277.5h1M269 151.5h1M581 76.5h1M279 218.5h1M238 218.5h1M248 136.5h1M637 65.5h1M582 61.5h1M632 83.5h1M150 286.5h1M645 85.5h1M626 63.5h1M637 64.5h1M1013 388.5h1M258 244.5h1M657 71.5h1M70 382.5h1M557 81.5h1M865 52.5h1M225 356.5h1M131 318.5h1M83 336.5h1M94 428.5h1M136 286.5h1M260 195.5h1M205 250.5h1M621 60.5h1M192 421.5h1M219 340.5h1M257 392.5h1M140 301.5h1M246 237.5h1M156 425.5h1M561 84.5h1M75 345.5h1M200 331.5h1M71 361.5h1M259 197.5h1M218 247.5h1M968 383.5h1M254 223.5h1M169 262.5h1M230 372.5h1M22 411.5h1M261 158.5h1M218 193.5h1M176 261.5h1M308 50.5h1M200 350.5h1M152 299.5h1M209 421.5h1M598 65.5h1M220 213.5h1M241 175.5h1M529 92.5h1M221 400.5h1M265 145.5h1M214 357.5h1M261 151.5h1M273 61.5h1M92 337.5h1M593 68.5h1M625 54.5h1M123 326.5h1M283 200.5h1M278 203.5h1M58 381.5h1M143 304.5h1M283 324.5h1M284 205.5h1M681 66.5h1M584 76.5h1M232 348.5h1M650 59.5h1M129 328.5h1M988 410.5h1M251 150.5h1M84 358.5h1M143 293.5h1M240 150.5h1M669 72.5h1M237 375.5h1M633 77.5h1M567 68.5h1M235 330.5h1M206 333.5h1M557 62.5h1" stroke="#081a46" stroke-width="1" fill="none"/><path d="M428 49.5h1M416 49.5h1M183 278.5h1M122 375.5h1M120 361.5h1M107 360.5h1M362 75.5h1M194 373.5h1M119 346.5h1M468 67.5h1M427 56.5h1M112 348.5h1M347 76.5h1M264 308.5h1M217 376.5h1M268 285.5h1M456 49.5h1M138 342.5h1M169 329.5h1M158 350.5h1M357 91.5h1M68 409.5h1M202 274.5h1M222 277.5h1M262 273.5h1M244 289.5h1M366 56.5h1M367 82.5h1M115 369.5h1M535 68.5h1M141 407.5h1M364 80.5h1M337 62.5h1M427 81.5h1M110 357.5h1M359 91.5h1M402 83.5h1M233 295.5h1M169 400.5h1M244 244.5h1M171 299.5h1M435 85.5h1M272 272.5h1M239 279.5h1M159 367.5h1M137 343.5h1M336 92.5h1M111 376.5h1M266 277.5h1M108 411.5h1M206 412.5h1M429 54.5h1M284 159.5h1M237 248.5h1M111 412.5h1M162 410.5h1M157 400.5h1M356 91.5h1M244 314.5h1M238 250.5h1M155 358.5h1M243 303.5h1M333 94.5h1M224 299.5h1M541 66.5h1M120 380.5h1M240 281.5h1M207 393.5h1M210 316.5h1M117 337.5h1M52 399.5h1M355 59.5h1M90 352.5h1M378 62.5h1M89 412.5h1M228 292.5h1M444 89.5h1M381 61.5h1M137 340.5h1M171 311.5h1M276 122.5h1M409 74.5h1M474 76.5h1M239 288.5h1M200 270.5h1M430 89.5h1M454 52.5h1M103 411.5h1M142 372.5h1M190 265.5h1M378 56.5h1M243 317.5h1M182 355.5h1M409 94.5h1M183 311.5h1M184 339.5h1M162 277.5h1M124 381.5h1M435 72.5h1M113 424.5h1M194 380.5h1M182 277.5h1M178 392.5h1M258 288.5h1M422 72.5h1M540 65.5h1M68 389.5h1M219 299.5h1M123 340.5h1M165 363.5h1M435 60.5h1M190 316.5h1M534 67.5h1M188 272.5h1M393 70.5h1M405 78.5h1M175 372.5h1M366 92.5h1M359 79.5h1M486 56.5h1M340 61.5h1M127 408.5h1M217 315.5h1M114 378.5h1M281 127.5h1M99 415.5h1M269 261.5h1M420 83.5h1M245 310.5h1M135 377.5h1M70 398.5h1M406 61.5h1M486 86.5h1M149 404.5h1M176 281.5h1M59 415.5h1M226 248.5h1M334 59.5h1M373 93.5h1M128 378.5h1M241 266.5h1M441 52.5h1M224 290.5h1M366 57.5h1M173 406.5h1M160 323.5h1M196 296.5h1M191 371.5h1M300 92.5h1M481 54.5h1M344 72.5h1M159 407.5h1M154 401.5h1M152 350.5h1M51 409.5h1M221 310.5h1M440 77.5h1M133 364.5h1M148 392.5h1M72 386.5h1M349 74.5h1M91 355.5h1M447 54.5h1M471 77.5h1M147 377.5h1M138 417.5h1M350 50.5h1M376 76.5h1M333 93.5h1M118 337.5h1M498 68.5h1M313 80.5h1M273 130.5h1M177 399.5h1M170 286.5h1M413 51.5h1M236 315.5h1M309 74.5h1M431 62.5h1M468 66.5h1M189 419.5h1M187 275.5h1M153 364.5h1M251 293.5h1M134 380.5h1M368 63.5h1M306 79.5h1M399 88.5h1M104 375.5h1M123 373.5h1M244 275.5h1M123 355.5h1M395 63.5h1M471 69.5h1M214 274.5h1M94 361.5h1M213 405.5h1M192 346.5h1M171 374.5h1M183 374.5h1M178 345.5h1M165 302.5h1M175 394.5h1M123 355.5h1M309 76.5h1M453 80.5h1M132 349.5h1M157 371.5h1M456 58.5h1M375 63.5h1M125 341.5h1M509 72.5h1M240 305.5h1M173 273.5h1M386 62.5h1M108 379.5h1M269 260.5h1M236 316.5h1M103 382.5h1M201 370.5h1M219 309.5h1M111 338.5h1M247 252.5h1M515 80.5h1M122 402.5h1M181 311.5h1M217 302.5h1M212 304.5h1M276 295.5h1M174 278.5h1M318 91.5h1M147 421.5h1M102 340.5h1M111 401.5h1M385 63.5h1M225 307.5h1M83 390.5h1M447 60.5h1M248 280.5h1M513 72.5h1M220 288.5h1M264 296.5h1M140 339.5h1M469 57.5h1M252 304.5h1M507 58.5h1M417 49.5h1M126 383.5h1M417 68.5h1M170 268.5h1M459 94.5h1M372 60.5h1M513 74.5h1M158 371.5h1M442 84.5h1M167 368.5h1M89 415.5h1M363 63.5h1M369 54.5h1M209 282.5h1M268 297.5h1M506 72.5h1M160 350.5h1M247 261.5h1M94 352.5h1M484 96.5h1M135 414.5h1M127 339.5h1M362 81.5h1M186 299.5h1M112 340.5h1M446 90.5h1M382 93.5h1M492 78.5h1M127 364.5h1M157 336.5h1M128 388.5h1M193 279.5h1M307 88.5h1M215 319.5h1M172 346.5h1M163 274.5h1M158 362.5h1M259 273.5h1M112 387.5h1M370 73.5h1M216 289.5h1M274 292.5h1M200 417.5h1M432 83.5h1M73 414.5h1M196 371.5h1M462 62.5h1" stroke="#1a4ca0" stroke-width="1" fill="none"/><path d="M297 54.5h1M1001 399.5h1M629 47.5h1M53 389.5h1M669 56.5h1M285 109.5h1M1014 400.5h1M252 215.5h1M285 170.5h1M229 209.5h1M160 265.5h1M610 66.5h1M220 187.5h1M659 61.5h1M990 400.5h1M193 428.5h1M259 214.5h1M152 426.5h1M694 57.5h1M551 74.5h1M231 181.5h1M259 174.5h1M280 228.5h1M251 171.5h1M227 366.5h1M224 236.5h1M240 166.5h1M217 325.5h1M245 138.5h1M159 273.5h1M119 322.5h1M340 48.5h1M780 48.5h1M80 348.5h1M281 79.5h1M219 210.5h1M146 279.5h1M526 53.5h1M222 156.5h1M893 54.5h1M283 163.5h1M262 317.5h1M39 414.5h1M254 140.5h1M182 256.5h1M215 169.5h1M215 347.5h1M224 429.5h1M148 320.5h1M273 180.5h1M181 422.5h1M260 157.5h1M284 311.5h1M268 227.5h1M624 90.5h1M40 394.5h1M81 330.5h1M280 244.5h1M149 315.5h1M792 49.5h1M627 58.5h1M239 191.5h1M64 380.5h1M272 112.5h1M51 386.5h1M95 334.5h1M237 179.5h1M271 210.5h1M269 315.5h1M190 420.5h1M260 135.5h1M265 210.5h1M282 86.5h1M268 237.5h1M519 88.5h1M21 422.5h1M111 317.5h1M281 240.5h1M35 388.5h1M533 84.5h1M204 430.5h1M327 58.5h1M244 135.5h1M65 382.5h1M803 49.5h1M265 188.5h1M169 259.5h1M133 428.5h1M251 386.5h1M99 428.5h1M259 319.5h1M545 80.5h1M197 423.5h1M162 269.5h1M127 298.5h1M128 320.5h1M230 239.5h1M224 201.5h1M343 48.5h1M497 48.5h1M220 384.5h1M564 82.5h1M152 294.5h1M279 185.5h1M244 373.5h1M232 140.5h1M137 324.5h1M239 210.5h1M187 422.5h1M321 58.5h1M667 75.5h1M633 61.5h1M309 51.5h1M235 198.5h1M98 328.5h1M264 186.5h1M81 329.5h1M225 390.5h1M29 419.5h1M221 408.5h1M91 343.5h1M75 423.5h1M274 200.5h1M272 187.5h1M279 89.5h1M25 424.5h1M105 323.5h1M69 360.5h1M253 146.5h1M152 423.5h1M137 287.5h1M262 149.5h1M989 394.5h1M604 86.5h1M282 80.5h1M637 61.5h1M623 48.5h1M260 202.5h1M136 429.5h1M302 53.5h1M245 215.5h1M102 318.5h1M543 62.5h1M229 351.5h1M622 80.5h1M127 301.5h1M281 56.5h1M206 348.5h1M282 51.5h1M28 416.5h1M92 319.5h1M126 294.5h1M251 210.5h1M103 334.5h1M616 72.5h1M1003 394.5h1M847 50.5h1M211 334.5h1M230 423.5h1M47 386.5h1M225 410.5h1M753 49.5h1M264 189.5h1M221 201.5h1M895 42.5h1M235 189.5h1M650 51.5h1M279 197.5h1M627 86.5h1M234 211.5h1M198 350.5h1M220 420.5h1M886 47.5h1M222 355.5h1M220 344.5h1M239 374.5h1M138 306.5h1M65 383.5h1M256 390.5h1M128 323.5h1M582 85.5h1M33 401.5h1M218 392.5h1M91 319.5h1M266 108.5h1M139 321.5h1M603 89.5h1M244 241.5h1M313 59.5h1M578 65.5h1M228 238.5h1M283 161.5h1M528 50.5h1M241 234.5h1M230 425.5h1M120 430.5h1M602 53.5h1M309 54.5h1M581 79.5h1M817 60.5h1M233 142.5h1M286 60.5h1M139 309.5h1M260 166.5h1M657 69.5h1M651 83.5h1M642 50.5h1M246 154.5h1M288 75.5h1M249 157.5h1M891 53.5h1M224 372.5h1M251 223.5h1M668 70.5h1M73 355.5h1M148 261.5h1M638 58.5h1M568 53.5h1M590 80.5h1M65 370.5h1M230 220.5h1M236 428.5h1M27 417.5h1M287 89.5h1M48 392.5h1M172 260.5h1M27 401.5h1M654 51.5h1M241 403.5h1M107 429.5h1M175 430.5h1M969 383.5h1M281 164.5h1M1011 386.5h1M48 425.5h1M202 330.5h1M223 355.5h1M176 251.5h1M263 400.5h1M294 54.5h1M873 42.5h1M129 291.5h1" stroke="#0e2c6a" stroke-width="1" fill="none"/><path d="M270 266.5h1M67 402.5h1M272 310.5h1M406 88.5h1M180 397.5h1M173 303.5h1M165 368.5h1M231 251.5h1M365 76.5h1M65 398.5h1M180 418.5h1M381 84.5h1M494 56.5h1M233 292.5h1M113 339.5h1M114 365.5h1M100 371.5h1M196 257.5h1M96 398.5h1M335 96.5h1M443 57.5h1M492 86.5h1M259 314.5h1M172 320.5h1M86 376.5h1M431 66.5h1M348 91.5h1M78 389.5h1M475 51.5h1M383 93.5h1M317 96.5h1M207 309.5h1M115 407.5h1M384 81.5h1M338 68.5h1M283 150.5h1M366 83.5h1M83 391.5h1M468 51.5h1M521 70.5h1M102 409.5h1M160 295.5h1M253 311.5h1M210 319.5h1M439 95.5h1M190 375.5h1M443 50.5h1M185 365.5h1M316 79.5h1M414 77.5h1M193 371.5h1M174 396.5h1M194 261.5h1M187 404.5h1M179 316.5h1M101 406.5h1M170 280.5h1M327 84.5h1M245 306.5h1M463 84.5h1M205 304.5h1M185 385.5h1M76 383.5h1M381 77.5h1M335 61.5h1M416 92.5h1M468 49.5h1M185 312.5h1M93 409.5h1M113 362.5h1M220 262.5h1M322 90.5h1M444 66.5h1M376 78.5h1M501 56.5h1M324 85.5h1M157 389.5h1M476 83.5h1M440 90.5h1M134 405.5h1M436 58.5h1M115 393.5h1M205 312.5h1M302 70.5h1M182 370.5h1M237 299.5h1M433 61.5h1M413 70.5h1M194 415.5h1M180 402.5h1M187 347.5h1M269 301.5h1M492 89.5h1M329 70.5h1M80 392.5h1M124 385.5h1M138 372.5h1M377 47.5h1M141 357.5h1M219 256.5h1M339 74.5h1M339 73.5h1M69 405.5h1M132 402.5h1M193 395.5h1M437 67.5h1M160 359.5h1M534 78.5h1M340 84.5h1M377 64.5h1M367 92.5h1M158 404.5h1M228 312.5h1M391 86.5h1M91 389.5h1M123 364.5h1M445 65.5h1M438 74.5h1M407 69.5h1M315 78.5h1M367 54.5h1M166 292.5h1M206 373.5h1M545 75.5h1M269 269.5h1M485 89.5h1M370 95.5h1M84 367.5h1M220 367.5h1M161 335.5h1M188 415.5h1M192 413.5h1M425 65.5h1M342 55.5h1M341 57.5h1M274 131.5h1M514 64.5h1M219 293.5h1M40 400.5h1M79 405.5h1M171 370.5h1M188 318.5h1M194 284.5h1M279 283.5h1M390 68.5h1M240 270.5h1M112 392.5h1M283 297.5h1M486 62.5h1M530 60.5h1M168 382.5h1M155 398.5h1M129 416.5h1M119 417.5h1M146 388.5h1M113 401.5h1M233 291.5h1M139 363.5h1M336 84.5h1M216 261.5h1M414 55.5h1M358 54.5h1M74 403.5h1M254 317.5h1M458 96.5h1M349 65.5h1M174 351.5h1M139 379.5h1M100 385.5h1M515 74.5h1M121 413.5h1M117 361.5h1M156 387.5h1M254 290.5h1M98 410.5h1M130 369.5h1M218 413.5h1M494 63.5h1M125 336.5h1M167 359.5h1M332 88.5h1M435 66.5h1M128 330.5h1M238 288.5h1M285 295.5h1M136 407.5h1M178 409.5h1M387 80.5h1M263 292.5h1M109 398.5h1M226 257.5h1M256 311.5h1M476 50.5h1M442 68.5h1M426 56.5h1M107 338.5h1M173 343.5h1M378 47.5h1M119 390.5h1M301 95.5h1M226 310.5h1M491 61.5h1M257 279.5h1M416 48.5h1M174 404.5h1M222 252.5h1M482 67.5h1M348 63.5h1M107 392.5h1M433 65.5h1M168 398.5h1M122 366.5h1M174 278.5h1M371 58.5h1M195 329.5h1M136 391.5h1M165 296.5h1M135 410.5h1M230 317.5h1M194 276.5h1M330 87.5h1M376 80.5h1M165 370.5h1M245 281.5h1M118 339.5h1M303 81.5h1M85 381.5h1M257 292.5h1M393 56.5h1M439 70.5h1M95 347.5h1M378 76.5h1M203 284.5h1M344 92.5h1M379 96.5h1M152 399.5h1M179 293.5h1M100 404.5h1M115 333.5h1M403 80.5h1M155 360.5h1M219 286.5h1M408 90.5h1M135 394.5h1M274 137.5h1M182 348.5h1M109 414.5h1M42 407.5h1M433 81.5h1M430 49.5h1M215 388.5h1M236 273.5h1M355 66.5h1M368 60.5h1M178 268.5h1M92 385.5h1M137 401.5h1M398 79.5h1M502 59.5h1M418 94.5h1M305 85.5h1M58 403.5h1M140 354.5h1M165 332.5h1M243 295.5h1M224 265.5h1M181 333.5h1M415 86.5h1M387 93.5h1M62 398.5h1M115 423.5h1M184 290.5h1M172 320.5h1M395 58.5h1M96 405.5h1M245 265.5h1M387 91.5h1M168 407.5h1M198 377.5h1M201 306.5h1M362 50.5h1M167 395.5h1M510 64.5h1M194 320.5h1M160 354.5h1M481 71.5h1M213 314.5h1M229 295.5h1M153 387.5h1M257 313.5h1M465 69.5h1M461 90.5h1M82 376.5h1M470 70.5h1M76 388.5h1M155 385.5h1M249 265.5h1M285 115.5h1M103 358.5h1M207 377.5h1" stroke="#184494" stroke-width="1" fill="none"/><path d="M453 61.5h1M333 77.5h1M161 395.5h1M481 75.5h1M87 377.5h1M499 72.5h1M262 257.5h1M442 73.5h1M465 83.5h1M265 292.5h1M176 410.5h1M262 259.5h1M339 95.5h1M237 308.5h1M283 124.5h1M204 273.5h1M166 329.5h1M514 87.5h1M379 76.5h1M251 287.5h1M319 86.5h1M546 68.5h1M393 84.5h1M439 55.5h1M229 295.5h1M244 303.5h1M274 125.5h1M279 289.5h1M483 67.5h1M181 277.5h1M507 67.5h1M208 317.5h1M306 95.5h1M178 375.5h1M124 382.5h1M168 387.5h1M280 285.5h1M206 375.5h1M208 383.5h1M443 75.5h1M134 369.5h1M200 318.5h1M184 379.5h1M435 87.5h1M129 393.5h1M158 336.5h1M215 405.5h1M79 418.5h1M174 304.5h1M95 362.5h1M103 403.5h1M412 74.5h1M214 307.5h1M480 55.5h1M270 292.5h1M364 48.5h1M117 377.5h1M211 378.5h1M251 295.5h1M273 275.5h1M517 70.5h1M275 293.5h1M166 410.5h1M191 390.5h1M190 326.5h1M262 263.5h1M155 327.5h1M483 61.5h1M434 47.5h1M179 371.5h1M239 256.5h1M238 291.5h1M487 93.5h1M110 418.5h1M423 84.5h1M307 77.5h1M142 399.5h1M138 340.5h1M214 373.5h1M486 92.5h1M166 277.5h1M120 371.5h1M379 82.5h1M164 403.5h1M188 280.5h1M277 147.5h1M118 395.5h1M211 286.5h1M92 401.5h1M467 49.5h1M138 343.5h1M346 78.5h1M229 276.5h1M170 353.5h1M384 88.5h1M420 80.5h1M339 75.5h1M216 257.5h1M471 63.5h1M254 249.5h1M202 387.5h1M259 315.5h1M280 278.5h1M477 90.5h1M399 76.5h1M198 398.5h1M240 245.5h1M375 67.5h1M398 77.5h1M105 357.5h1M201 320.5h1M196 392.5h1M168 349.5h1M210 360.5h1M36 403.5h1M103 397.5h1M155 320.5h1M166 286.5h1M122 407.5h1M160 407.5h1M263 312.5h1M119 404.5h1M104 411.5h1M360 52.5h1M272 271.5h1M208 405.5h1M153 344.5h1M426 64.5h1M468 49.5h1M110 346.5h1M372 55.5h1M212 262.5h1M430 84.5h1M473 52.5h1M129 341.5h1M162 421.5h1M260 265.5h1M436 74.5h1M199 368.5h1M511 61.5h1M191 388.5h1M180 414.5h1M156 291.5h1M151 368.5h1M367 55.5h1M133 403.5h1M169 304.5h1M199 297.5h1M219 278.5h1M348 57.5h1M80 401.5h1M209 409.5h1M408 65.5h1M130 369.5h1M332 85.5h1M184 325.5h1M252 310.5h1M473 82.5h1M170 369.5h1M110 340.5h1M204 383.5h1M409 94.5h1M159 301.5h1M453 82.5h1M167 401.5h1M397 64.5h1M119 340.5h1M109 384.5h1M390 66.5h1M254 300.5h1M518 60.5h1M172 418.5h1M400 71.5h1M516 72.5h1M309 71.5h1M279 144.5h1M214 364.5h1M231 302.5h1M174 415.5h1M148 400.5h1M317 89.5h1M375 63.5h1M283 149.5h1M495 86.5h1M220 270.5h1M487 79.5h1M177 291.5h1M273 301.5h1M456 73.5h1M412 63.5h1M198 280.5h1M490 82.5h1M190 276.5h1M93 355.5h1M250 285.5h1M428 66.5h1M202 298.5h1M245 248.5h1M208 372.5h1M149 384.5h1M285 270.5h1M377 61.5h1M115 378.5h1M109 421.5h1M415 66.5h1M202 410.5h1M174 302.5h1M195 268.5h1M207 398.5h1M106 377.5h1M454 50.5h1M251 317.5h1M149 371.5h1M425 69.5h1M485 58.5h1M201 356.5h1M137 418.5h1M108 380.5h1M182 376.5h1M209 268.5h1M231 270.5h1M184 286.5h1M153 340.5h1M157 306.5h1M381 57.5h1M148 378.5h1M88 371.5h1M142 384.5h1M431 87.5h1M165 393.5h1M342 67.5h1M274 261.5h1M247 301.5h1M113 348.5h1M189 280.5h1M285 291.5h1M176 383.5h1M124 333.5h1M72 411.5h1M246 317.5h1M152 348.5h1M202 258.5h1M272 287.5h1M483 57.5h1M103 343.5h1" stroke="#0e2a62" stroke-width="1" fill="none"/><path d="M265 309.5h1M257 306.5h1M286 132.5h1M420 81.5h1M148 420.5h1M453 69.5h1M296 85.5h1M177 383.5h1M171 279.5h1M363 67.5h1M185 373.5h1M444 77.5h1M279 309.5h1M450 53.5h1M150 351.5h1M348 55.5h1M120 361.5h1M503 77.5h1M178 353.5h1M106 374.5h1M497 88.5h1M376 92.5h1M156 396.5h1M418 66.5h1M244 247.5h1M199 325.5h1M353 84.5h1M273 267.5h1M231 249.5h1M379 72.5h1M216 391.5h1M473 47.5h1M472 56.5h1M110 408.5h1M168 324.5h1M138 344.5h1M163 409.5h1M226 279.5h1M162 374.5h1M155 357.5h1M341 82.5h1M423 88.5h1M235 302.5h1M200 413.5h1M283 118.5h1M431 92.5h1M145 409.5h1M144 370.5h1M398 70.5h1M248 252.5h1M133 375.5h1M226 280.5h1M315 84.5h1M191 286.5h1M401 93.5h1M117 381.5h1M449 87.5h1M442 82.5h1M523 64.5h1M187 363.5h1M173 414.5h1M83 415.5h1M403 94.5h1M143 362.5h1M175 302.5h1M222 270.5h1M73 397.5h1M228 290.5h1M473 71.5h1M468 60.5h1M407 82.5h1M344 83.5h1M283 156.5h1M349 88.5h1M242 269.5h1M240 295.5h1M422 74.5h1M391 96.5h1M184 370.5h1M411 83.5h1M133 408.5h1M261 301.5h1M336 64.5h1M266 280.5h1M166 336.5h1M208 378.5h1M270 270.5h1M193 390.5h1M409 54.5h1M238 270.5h1M168 295.5h1M283 128.5h1M164 407.5h1M149 329.5h1M188 327.5h1M371 68.5h1M506 81.5h1M360 61.5h1M101 363.5h1M477 83.5h1M106 371.5h1M377 84.5h1M185 359.5h1M407 87.5h1M411 75.5h1M176 408.5h1M463 58.5h1M113 352.5h1M148 365.5h1M321 67.5h1M346 60.5h1M164 327.5h1M267 246.5h1M240 266.5h1M267 275.5h1M262 310.5h1M136 355.5h1M238 293.5h1M181 405.5h1M66 409.5h1M114 406.5h1M138 356.5h1M175 328.5h1M88 376.5h1M176 402.5h1M328 64.5h1M156 393.5h1M197 395.5h1M158 396.5h1M483 90.5h1M524 62.5h1M324 87.5h1M453 91.5h1M96 403.5h1M265 260.5h1M494 92.5h1M391 75.5h1M140 352.5h1M412 75.5h1M144 353.5h1M142 331.5h1M122 340.5h1M50 404.5h1M103 347.5h1M178 360.5h1M456 60.5h1M539 71.5h1M186 393.5h1M145 395.5h1M514 78.5h1M130 366.5h1M223 310.5h1M163 371.5h1M149 411.5h1M253 299.5h1M378 80.5h1M358 92.5h1M346 95.5h1M422 76.5h1M328 94.5h1M503 61.5h1M250 266.5h1M504 52.5h1M159 298.5h1M137 408.5h1M175 390.5h1M227 288.5h1M416 66.5h1M106 356.5h1M275 252.5h1M174 410.5h1M105 413.5h1M142 394.5h1M178 384.5h1M387 83.5h1M252 313.5h1M283 155.5h1M335 58.5h1M392 77.5h1M133 422.5h1M259 255.5h1M168 358.5h1M390 74.5h1M155 396.5h1M333 80.5h1M342 65.5h1M89 417.5h1M59 407.5h1M196 387.5h1M365 92.5h1M353 66.5h1M479 96.5h1M143 399.5h1M286 305.5h1M233 247.5h1M121 369.5h1M181 276.5h1M410 73.5h1M260 263.5h1M190 328.5h1M400 56.5h1M184 274.5h1M199 277.5h1M272 290.5h1M263 290.5h1M418 75.5h1M494 57.5h1M359 81.5h1M210 364.5h1M389 81.5h1M215 396.5h1M246 254.5h1M279 299.5h1M61 410.5h1M211 381.5h1M325 70.5h1M230 298.5h1M41 398.5h1M215 365.5h1M397 79.5h1M427 47.5h1M281 270.5h1M486 85.5h1M262 286.5h1M259 253.5h1M175 398.5h1M133 391.5h1M116 396.5h1M122 381.5h1M59 411.5h1" stroke="#0c265a" stroke-width="1" fill="none"/><path d="M973 421.5h1M1017 56.5h1M994 133.5h1M970 58.5h1M74 236.5h1M990 416.5h1M133 146.5h1M973 430.5h1M55 236.5h1M1026 270.5h1M897 89.5h1M1006 117.5h1M999 109.5h1M255 347.5h1M939 402.5h1M979 293.5h1M979 150.5h1M154 177.5h1M934 53.5h1M252 380.5h1M120 178.5h1M709 64.5h1M962 363.5h1M247 79.5h1M64 140.5h1M146 48.5h1M996 80.5h1M69 184.5h1M950 362.5h1M77 120.5h1M262 339.5h1M934 62.5h1M111 77.5h1M89 139.5h1M1031 175.5h1M113 282.5h1M1003 94.5h1M967 160.5h1M62 40.5h1M916 86.5h1M28 371.5h1M974 175.5h1M975 198.5h1M1032 159.5h1M138 102.5h1M966 165.5h1M69 309.5h1M83 62.5h1M218 56.5h1M110 191.5h1M130 178.5h1M21 123.5h1M276 327.5h1M236 86.5h1M947 409.5h1M146 229.5h1M1043 418.5h1M206 136.5h1M171 166.5h1M129 177.5h1M1007 152.5h1M1018 425.5h1M40 244.5h1M63 267.5h1M91 177.5h1M1025 396.5h1M989 60.5h1M108 87.5h1M190 43.5h1M987 195.5h1M159 224.5h1M22 160.5h1M154 65.5h1M136 101.5h1M155 132.5h1M234 119.5h1M209 173.5h1M260 375.5h1M952 413.5h1M106 261.5h1M726 84.5h1M242 419.5h1M972 37.5h1M865 24.5h1M195 55.5h1M244 369.5h1M275 365.5h1M1039 55.5h1M955 383.5h1M920 63.5h1M709 52.5h1M922 31.5h1M250 376.5h1M207 156.5h1M154 151.5h1M203 199.5h1M169 46.5h1M988 143.5h1M185 243.5h1M874 90.5h1M941 322.5h1M986 329.5h1M67 212.5h1M911 33.5h1M966 65.5h1M818 96.5h1M874 65.5h1M94 279.5h1M219 140.5h1M221 83.5h1M269 86.5h1M717 68.5h1M958 237.5h1M72 75.5h1M129 261.5h1M201 65.5h1M34 269.5h1M100 120.5h1M95 201.5h1M1007 302.5h1M44 182.5h1M243 367.5h1M205 145.5h1M1013 24.5h1M1017 139.5h1M197 70.5h1M203 197.5h1M119 167.5h1M212 221.5h1M1006 135.5h1M98 56.5h1M137 123.5h1M65 136.5h1M1005 95.5h1M183 126.5h1M23 47.5h1M754 66.5h1M960 48.5h1M1016 118.5h1M76 82.5h1M876 64.5h1M1022 355.5h1M983 318.5h1M147 153.5h1M720 96.5h1M51 82.5h1M75 184.5h1M270 54.5h1M993 143.5h1M122 110.5h1M922 71.5h1M1033 321.5h1M105 20.5h1M266 425.5h1M979 365.5h1M163 67.5h1M947 284.5h1M1028 404.5h1M956 314.5h1M236 343.5h1M946 178.5h1M1040 176.5h1M1024 298.5h1M119 49.5h1M1031 411.5h1M89 137.5h1M281 392.5h1M930 51.5h1M965 266.5h1M948 316.5h1M959 160.5h1M739 90.5h1M575 90.5h1M953 355.5h1M202 110.5h1M979 164.5h1M965 200.5h1M1029 46.5h1M70 136.5h1M963 85.5h1M48 150.5h1M938 421.5h1M163 101.5h1M57 206.5h1M966 186.5h1M992 357.5h1M117 306.5h1M98 234.5h1M1035 67.5h1M72 327.5h1M1031 84.5h1M188 130.5h1M68 286.5h1M951 44.5h1M994 231.5h1M1020 403.5h1M999 162.5h1M144 83.5h1M1027 316.5h1M979 104.5h1M84 53.5h1M120 122.5h1M180 183.5h1M977 370.5h1M78 75.5h1M144 150.5h1M98 184.5h1M37 59.5h1M21 64.5h1M976 135.5h1M980 71.5h1M606 94.5h1M1041 253.5h1M951 156.5h1M88 118.5h1M92 142.5h1M983 374.5h1M1034 130.5h1M270 62.5h1M229 112.5h1M93 104.5h1M136 80.5h1M941 168.5h1M77 128.5h1M979 84.5h1M185 121.5h1M712 63.5h1M642 91.5h1M895 62.5h1M255 373.5h1M1023 357.5h1M186 34.5h1M940 323.5h1M992 148.5h1M1030 201.5h1M75 138.5h1M140 191.5h1M235 60.5h1M139 40.5h1M248 64.5h1M41 252.5h1M204 138.5h1M89 21.5h1M142 255.5h1M984 153.5h1M1014 53.5h1M89 228.5h1M26 262.5h1M34 141.5h1M1005 192.5h1M285 349.5h1M127 188.5h1M180 132.5h1M1010 339.5h1M961 224.5h1M97 32.5h1M62 360.5h1M247 68.5h1M952 223.5h1M890 25.5h1M95 307.5h1M30 131.5h1M128 269.5h1M983 430.5h1M712 55.5h1M960 191.5h1M58 95.5h1M906 62.5h1M1024 87.5h1M39 180.5h1M22 177.5h1M983 63.5h1M81 70.5h1M897 33.5h1M952 415.5h1M178 151.5h1M795 72.5h1M869 65.5h1M1031 187.5h1M959 228.5h1M59 336.5h1M1014 209.5h1M54 146.5h1M1008 207.5h1M47 84.5h1M188 187.5h1M160 160.5h1M967 28.5h1M106 219.5h1M850 94.5h1M271 414.5h1M117 182.5h1M955 186.5h1M145 249.5h1M935 28.5h1M165 116.5h1M108 312.5h1M58 149.5h1M1015 180.5h1M28 430.5h1M161 185.5h1M865 64.5h1M36 79.5h1M962 286.5h1M34 155.5h1M1043 179.5h1M990 370.5h1M982 191.5h1M118 100.5h1M1006 28.5h1M91 71.5h1M70 163.5h1M77 159.5h1M1018 138.5h1M61 196.5h1M168 138.5h1M192 151.5h1M681 80.5h1M30 352.5h1M937 424.5h1M35 177.5h1M62 66.5h1M954 168.5h1M31 247.5h1M944 28.5h1M147 42.5h1M943 168.5h1M787 95.5h1M278 424.5h1M238 368.5h1M895 57.5h1M222 80.5h1M1027 25.5h1M946 253.5h1M1026 237.5h1M943 111.5h1M59 194.5h1M91 101.5h1M152 60.5h1M991 252.5h1M176 134.5h1M902 20.5h1M167 131.5h1M1026 127.5h1M199 98.5h1M178 184.5h1M107 296.5h1M254 83.5h1" stroke="#0a2258" stroke-width="1" fill="none"/><path d="M960 103.5h1M37 226.5h1M95 273.5h1M222 93.5h1M278 349.5h1M934 43.5h1M244 61.5h1M171 91.5h1M155 144.5h1M948 347.5h1M244 426.5h1M1017 250.5h1M924 91.5h1M115 288.5h1M1029 137.5h1M959 34.5h1M22 19.5h1M185 162.5h1M879 31.5h1M116 275.5h1M90 140.5h1M116 39.5h1M23 43.5h1M920 44.5h1M192 141.5h1M943 322.5h1M979 87.5h1M90 77.5h1M193 191.5h1M60 343.5h1M160 103.5h1M66 331.5h1M992 374.5h1M176 117.5h1M924 62.5h1M986 130.5h1M154 81.5h1M181 128.5h1M1005 241.5h1M156 247.5h1M172 202.5h1M949 378.5h1M195 220.5h1M1037 194.5h1M145 33.5h1M154 62.5h1M26 93.5h1M890 38.5h1M130 103.5h1M181 145.5h1M1013 189.5h1M67 211.5h1M165 224.5h1M950 28.5h1M225 121.5h1M108 301.5h1M246 335.5h1M89 301.5h1M813 95.5h1M184 114.5h1M37 122.5h1M1022 207.5h1M974 355.5h1M1022 88.5h1M1022 144.5h1M973 280.5h1M49 204.5h1M82 55.5h1M1004 409.5h1M40 162.5h1M894 96.5h1M282 424.5h1M749 57.5h1M160 102.5h1M998 25.5h1M106 281.5h1M144 188.5h1M258 99.5h1M109 78.5h1M963 290.5h1M34 147.5h1M986 187.5h1M152 50.5h1M164 176.5h1M1025 349.5h1M40 262.5h1M139 169.5h1M119 199.5h1M135 108.5h1M93 105.5h1M255 340.5h1M116 62.5h1M1005 274.5h1M200 46.5h1M940 29.5h1M1035 425.5h1M237 53.5h1M1014 33.5h1M213 119.5h1M722 67.5h1M758 89.5h1M942 409.5h1M40 187.5h1M118 310.5h1M36 229.5h1M109 166.5h1M98 183.5h1M279 410.5h1M948 182.5h1M208 107.5h1M43 293.5h1M238 117.5h1M102 162.5h1M101 101.5h1M991 173.5h1M1029 368.5h1M956 165.5h1M126 238.5h1M702 55.5h1M989 56.5h1M982 255.5h1M65 39.5h1M203 86.5h1M185 97.5h1M1002 74.5h1M98 278.5h1M945 380.5h1M140 42.5h1M282 394.5h1M286 428.5h1M209 172.5h1M41 305.5h1M714 50.5h1M50 278.5h1M128 270.5h1M1009 377.5h1M176 40.5h1M736 60.5h1M952 161.5h1M954 218.5h1M59 161.5h1M50 305.5h1M134 176.5h1M251 413.5h1M55 242.5h1M67 304.5h1M925 31.5h1M879 65.5h1M236 118.5h1M207 175.5h1M1019 380.5h1M130 145.5h1M83 218.5h1M1036 395.5h1M1002 366.5h1M133 90.5h1M826 75.5h1M1002 206.5h1M88 204.5h1M166 168.5h1M994 179.5h1M1045 203.5h1M51 342.5h1M551 96.5h1M86 102.5h1M42 197.5h1M994 326.5h1M689 96.5h1M275 341.5h1M1032 100.5h1M968 413.5h1M1028 228.5h1M1003 50.5h1M207 172.5h1M941 355.5h1M27 91.5h1M1030 397.5h1M836 61.5h1M91 77.5h1M57 337.5h1M1044 422.5h1M1013 54.5h1M1015 203.5h1M984 162.5h1M100 127.5h1M930 44.5h1M235 340.5h1M565 90.5h1M961 207.5h1M130 100.5h1M246 93.5h1M1032 90.5h1M66 305.5h1M1034 381.5h1M61 85.5h1M68 318.5h1M1018 298.5h1M1040 345.5h1M947 175.5h1M170 103.5h1M999 107.5h1M142 191.5h1M233 131.5h1M236 128.5h1M185 238.5h1M1040 178.5h1M109 171.5h1M80 250.5h1M1001 139.5h1M99 181.5h1M1002 149.5h1M1025 81.5h1M922 24.5h1M987 154.5h1M939 76.5h1M67 83.5h1M918 25.5h1M245 361.5h1M961 25.5h1M253 339.5h1M203 190.5h1M67 19.5h1M952 239.5h1M874 22.5h1M27 50.5h1M951 127.5h1M164 95.5h1M52 204.5h1M200 22.5h1M1043 75.5h1M150 249.5h1M112 144.5h1M1014 97.5h1M993 313.5h1M30 118.5h1M144 127.5h1M161 178.5h1M972 176.5h1M243 64.5h1M94 104.5h1M1017 315.5h1M1003 154.5h1M1045 320.5h1M926 40.5h1M941 76.5h1M96 178.5h1M985 126.5h1M110 313.5h1M186 84.5h1M169 74.5h1M169 106.5h1M799 63.5h1M995 354.5h1M31 56.5h1M805 65.5h1M31 53.5h1M959 175.5h1M1000 367.5h1M961 64.5h1M22 136.5h1M126 91.5h1M71 173.5h1M72 29.5h1M133 159.5h1M953 336.5h1M129 225.5h1M982 150.5h1M229 101.5h1M1009 428.5h1M955 113.5h1M1025 211.5h1M148 40.5h1M918 92.5h1M974 156.5h1M1023 368.5h1M965 342.5h1M1030 113.5h1M187 236.5h1M926 59.5h1M1017 237.5h1M965 354.5h1M243 358.5h1M122 60.5h1M144 148.5h1M1004 430.5h1M100 118.5h1M140 197.5h1M76 188.5h1M192 124.5h1M124 143.5h1M1025 146.5h1M153 111.5h1M1034 105.5h1M971 218.5h1M1013 255.5h1M68 327.5h1M1012 231.5h1M1045 32.5h1M84 303.5h1M115 74.5h1M197 55.5h1M257 92.5h1M184 107.5h1M1045 389.5h1M124 48.5h1M1007 411.5h1M1022 25.5h1M1001 112.5h1M173 191.5h1M938 200.5h1M255 372.5h1M1014 282.5h1M106 279.5h1M861 83.5h1M102 240.5h1M159 200.5h1M953 75.5h1M82 291.5h1M49 327.5h1M965 113.5h1M993 56.5h1M259 388.5h1M112 126.5h1M994 239.5h1M219 234.5h1M175 171.5h1M57 242.5h1M1000 55.5h1M177 131.5h1M49 156.5h1M85 137.5h1M991 66.5h1M258 347.5h1M196 100.5h1M160 248.5h1M982 252.5h1M988 419.5h1M1035 239.5h1M943 194.5h1M153 122.5h1M206 165.5h1M40 312.5h1M987 197.5h1M944 67.5h1M944 72.5h1M51 96.5h1M1043 191.5h1M144 247.5h1M944 91.5h1M1014 135.5h1M23 154.5h1M264 75.5h1M865 31.5h1M1043 258.5h1M103 216.5h1M89 32.5h1M1021 49.5h1M980 300.5h1M191 182.5h1M126 186.5h1M70 191.5h1M701 47.5h1" stroke="#061236" stroke-width="1" fill="none"/><path d="M619 76.5h1M559 63.5h1M863 52.5h1M868 57.5h1M211 244.5h1M958 390.5h1M79 333.5h1M268 153.5h1M222 395.5h1M76 340.5h1M866 57.5h1M225 217.5h1M691 63.5h1M588 84.5h1M682 61.5h1M221 197.5h1M234 220.5h1M662 71.5h1M269 175.5h1M601 89.5h1M141 274.5h1M279 316.5h1M28 405.5h1M823 54.5h1M237 373.5h1M236 224.5h1M224 388.5h1M90 428.5h1M203 340.5h1M632 71.5h1M250 395.5h1M548 64.5h1M610 68.5h1M239 176.5h1M240 398.5h1M73 342.5h1M262 112.5h1M845 57.5h1M224 145.5h1M251 178.5h1M573 77.5h1M276 217.5h1M273 108.5h1M120 323.5h1M250 379.5h1M117 318.5h1M261 154.5h1M236 138.5h1M239 183.5h1M90 430.5h1M702 65.5h1M240 397.5h1M207 326.5h1M968 385.5h1M738 47.5h1M213 320.5h1M655 74.5h1M258 159.5h1M171 258.5h1M345 49.5h1M216 325.5h1M165 264.5h1M247 189.5h1M652 75.5h1M598 74.5h1M156 424.5h1M629 84.5h1M1009 384.5h1M224 212.5h1M227 378.5h1M181 253.5h1M279 87.5h1M164 260.5h1M202 333.5h1M273 216.5h1M136 296.5h1M28 414.5h1M82 326.5h1M876 43.5h1M208 337.5h1M89 344.5h1M133 278.5h1M335 50.5h1M611 78.5h1M21 415.5h1M198 424.5h1M246 207.5h1M559 74.5h1M518 92.5h1M847 55.5h1M566 56.5h1M569 77.5h1M177 254.5h1M975 400.5h1M1011 400.5h1M547 84.5h1M974 402.5h1M276 105.5h1M72 337.5h1M92 428.5h1M68 362.5h1M673 54.5h1M99 426.5h1M270 122.5h1M277 91.5h1M88 337.5h1M249 150.5h1M257 145.5h1M620 75.5h1M215 194.5h1M553 70.5h1M249 134.5h1M820 57.5h1M329 52.5h1M253 238.5h1M551 78.5h1M282 78.5h1M322 62.5h1M62 424.5h1M233 321.5h1M876 50.5h1M1012 402.5h1M243 142.5h1M126 305.5h1M196 329.5h1M598 84.5h1M736 50.5h1M201 252.5h1M196 422.5h1M126 291.5h1M662 75.5h1M537 90.5h1M777 58.5h1M591 80.5h1M94 341.5h1M149 309.5h1M265 135.5h1M207 352.5h1M224 406.5h1M606 75.5h1M155 425.5h1M262 243.5h1M241 151.5h1M204 326.5h1M222 396.5h1M579 87.5h1M233 144.5h1M997 385.5h1M251 181.5h1M217 248.5h1M667 55.5h1M598 77.5h1M323 55.5h1M649 86.5h1M259 390.5h1M784 49.5h1M545 61.5h1M246 331.5h1M253 177.5h1M276 81.5h1M248 404.5h1M45 420.5h1M200 430.5h1M301 54.5h1M639 76.5h1M148 426.5h1M892 51.5h1M243 189.5h1M285 186.5h1M279 160.5h1M31 417.5h1M524 51.5h1M252 223.5h1M758 49.5h1M998 400.5h1M561 64.5h1M570 74.5h1M876 46.5h1M814 54.5h1M260 194.5h1M247 178.5h1M251 119.5h1M879 47.5h1M668 69.5h1M234 398.5h1M73 375.5h1M28 415.5h1M80 365.5h1M155 267.5h1M223 392.5h1M243 145.5h1M195 247.5h1M258 242.5h1M292 50.5h1M269 213.5h1M178 259.5h1M242 239.5h1M266 193.5h1M573 52.5h1M871 41.5h1M250 197.5h1M153 299.5h1M202 247.5h1M229 346.5h1M270 192.5h1M864 43.5h1M143 277.5h1M239 397.5h1M605 63.5h1M273 155.5h1M68 385.5h1M269 187.5h1M517 96.5h1M605 66.5h1M229 207.5h1M521 89.5h1M591 89.5h1M230 170.5h1M141 327.5h1M152 288.5h1M217 174.5h1M297 58.5h1M612 51.5h1M146 304.5h1M233 321.5h1M211 162.5h1M630 53.5h1M265 110.5h1M300 50.5h1M263 163.5h1M352 47.5h1M237 391.5h1M46 424.5h1M227 397.5h1M115 425.5h1M320 60.5h1M778 58.5h1M259 132.5h1M776 58.5h1M31 416.5h1" stroke="#0a2052" stroke-width="1" fill="none"/><path d="M939 170.5h1M828 76.5h1M954 417.5h1M983 253.5h1M1033 97.5h1M53 66.5h1M952 34.5h1M144 154.5h1M236 334.5h1M1019 338.5h1M120 276.5h1M44 147.5h1M988 421.5h1M84 77.5h1M96 234.5h1M946 346.5h1M980 111.5h1M130 75.5h1M951 56.5h1M157 147.5h1M50 307.5h1M820 61.5h1M739 80.5h1M1001 135.5h1M108 277.5h1M548 47.5h1M265 53.5h1M985 142.5h1M94 106.5h1M124 90.5h1M32 33.5h1M204 120.5h1M40 307.5h1M732 55.5h1M65 320.5h1M96 40.5h1M1023 282.5h1M203 142.5h1M998 277.5h1M1045 45.5h1M223 96.5h1M937 41.5h1M1023 108.5h1M1001 238.5h1M970 348.5h1M960 421.5h1M83 49.5h1M963 413.5h1M117 287.5h1M158 188.5h1M994 170.5h1M59 368.5h1M952 349.5h1M214 74.5h1M855 79.5h1M1006 167.5h1M73 172.5h1M167 194.5h1M175 183.5h1M1043 264.5h1M1020 290.5h1M32 281.5h1M31 181.5h1M156 142.5h1M152 142.5h1M27 366.5h1M275 370.5h1M809 90.5h1M930 68.5h1M198 118.5h1M1032 109.5h1M92 260.5h1M171 226.5h1M237 130.5h1M43 353.5h1M54 82.5h1M118 183.5h1M190 84.5h1M72 122.5h1M944 129.5h1M1008 74.5h1M126 106.5h1M943 415.5h1M98 87.5h1M161 26.5h1M970 87.5h1M987 236.5h1M843 69.5h1M85 320.5h1M690 48.5h1M1009 54.5h1M1019 170.5h1M981 372.5h1M1010 28.5h1M664 93.5h1M203 222.5h1M714 63.5h1M695 87.5h1M204 135.5h1M49 123.5h1M55 306.5h1M944 412.5h1M90 160.5h1M978 114.5h1M116 283.5h1M178 140.5h1M233 122.5h1M158 159.5h1M786 84.5h1M239 334.5h1M1015 364.5h1M113 216.5h1M40 246.5h1M854 84.5h1M65 98.5h1M181 187.5h1M1010 132.5h1M123 145.5h1M87 99.5h1M52 89.5h1M227 79.5h1M955 427.5h1M242 129.5h1M241 129.5h1M110 274.5h1M725 59.5h1M620 96.5h1M935 76.5h1M154 87.5h1M67 200.5h1M205 132.5h1M55 129.5h1M175 195.5h1M47 61.5h1M1004 153.5h1M211 205.5h1M1010 230.5h1M185 141.5h1M721 83.5h1M862 69.5h1M157 147.5h1M188 214.5h1M984 188.5h1M1001 357.5h1M960 141.5h1M777 82.5h1M182 99.5h1M49 253.5h1M220 228.5h1M1041 117.5h1M152 167.5h1M1013 95.5h1M707 47.5h1M60 229.5h1M1004 360.5h1M147 137.5h1M936 74.5h1M76 251.5h1M190 101.5h1M978 69.5h1M990 82.5h1M732 59.5h1M1008 98.5h1M976 256.5h1M60 329.5h1M774 85.5h1M959 75.5h1M1034 131.5h1M982 63.5h1M268 335.5h1M101 306.5h1M952 364.5h1M967 319.5h1M1024 238.5h1M120 76.5h1M1001 199.5h1M1037 135.5h1M226 119.5h1M933 56.5h1M1000 92.5h1M39 222.5h1M156 118.5h1M156 99.5h1M254 381.5h1M51 130.5h1M950 221.5h1M182 129.5h1M102 81.5h1M158 111.5h1M1026 137.5h1M248 366.5h1M975 101.5h1M1015 319.5h1M50 269.5h1M78 51.5h1M267 357.5h1M999 372.5h1M119 201.5h1M869 31.5h1M180 62.5h1M1007 65.5h1M240 364.5h1M90 277.5h1M44 67.5h1M181 195.5h1M174 86.5h1M62 171.5h1M109 274.5h1M149 42.5h1M992 113.5h1M129 68.5h1M138 92.5h1M986 203.5h1M1041 422.5h1M673 83.5h1M27 428.5h1M780 59.5h1M954 220.5h1M139 22.5h1M92 116.5h1M1003 369.5h1M85 284.5h1M55 331.5h1M53 248.5h1M263 354.5h1M41 28.5h1M949 100.5h1M116 70.5h1M787 61.5h1M133 146.5h1M1029 360.5h1M168 136.5h1M26 162.5h1M952 89.5h1M1041 109.5h1M179 33.5h1M589 93.5h1M120 112.5h1M962 89.5h1M171 110.5h1M128 176.5h1M1011 238.5h1M1029 143.5h1M952 60.5h1M214 226.5h1M47 217.5h1M1034 303.5h1M989 260.5h1M983 183.5h1M134 208.5h1M127 187.5h1M234 117.5h1M35 169.5h1M901 62.5h1M944 422.5h1M198 139.5h1M955 373.5h1M969 69.5h1M65 330.5h1M970 249.5h1M702 82.5h1M953 81.5h1M95 118.5h1M184 170.5h1M65 80.5h1M951 144.5h1M169 72.5h1M944 329.5h1M960 419.5h1M885 77.5h1M100 114.5h1M164 241.5h1M261 332.5h1M140 52.5h1M1000 420.5h1M165 124.5h1M1005 347.5h1M922 55.5h1M46 59.5h1M1028 396.5h1M1027 126.5h1M35 124.5h1M150 80.5h1M1035 167.5h1M1029 227.5h1M917 79.5h1M131 136.5h1M990 341.5h1M179 52.5h1M983 174.5h1M129 58.5h1M220 137.5h1M176 63.5h1M172 43.5h1M107 270.5h1M797 81.5h1M925 89.5h1M103 148.5h1M1011 347.5h1M716 86.5h1M1006 22.5h1M235 344.5h1M839 91.5h1M961 324.5h1M113 138.5h1M263 378.5h1M197 129.5h1M219 91.5h1M1030 156.5h1M1042 114.5h1M994 196.5h1M832 94.5h1M676 47.5h1M1039 183.5h1M123 163.5h1M35 108.5h1M124 264.5h1M956 210.5h1M922 66.5h1M1023 248.5h1M191 239.5h1M93 187.5h1M1040 322.5h1M26 95.5h1M996 193.5h1M27 371.5h1M25 348.5h1M22 343.5h1M146 104.5h1M743 55.5h1M161 134.5h1M963 368.5h1M108 258.5h1M65 288.5h1M960 224.5h1M957 369.5h1M87 300.5h1M207 101.5h1M67 331.5h1M125 263.5h1M140 256.5h1M102 297.5h1M48 352.5h1M969 164.5h1M945 310.5h1M924 56.5h1M952 391.5h1M1036 375.5h1M101 55.5h1M967 203.5h1M939 348.5h1M86 319.5h1M169 151.5h1M27 224.5h1M993 289.5h1M177 192.5h1M209 177.5h1M960 204.5h1M243 429.5h1M909 42.5h1M1019 167.5h1M82 125.5h1M37 338.5h1M244 89.5h1M220 125.5h1M1024 50.5h1M141 28.5h1M122 180.5h1M938 391.5h1M1018 263.5h1M925 56.5h1M115 97.5h1M996 377.5h1M996 30.5h1M180 49.5h1M78 292.5h1M50 364.5h1M947 69.5h1M121 51.5h1M136 143.5h1" stroke="#050f2e" stroke-width="1" fill="none"/><path d="M184 368.5h1M110 403.5h1M250 315.5h1M168 326.5h1M116 374.5h1M169 393.5h1M175 336.5h1M156 278.5h1M203 373.5h1M168 276.5h1M212 399.5h1M121 342.5h1M373 86.5h1M88 395.5h1M253 258.5h1M73 404.5h1M450 83.5h1M278 148.5h1M250 316.5h1M184 385.5h1M112 372.5h1M183 329.5h1M410 47.5h1M69 408.5h1M467 74.5h1M224 256.5h1M380 71.5h1M372 56.5h1M460 56.5h1M455 61.5h1M412 52.5h1M51 398.5h1M233 295.5h1M80 416.5h1M261 269.5h1M202 276.5h1M264 252.5h1M161 378.5h1M213 270.5h1M96 391.5h1M492 51.5h1M279 269.5h1M144 395.5h1M88 395.5h1M193 369.5h1M421 72.5h1M204 299.5h1M176 327.5h1M274 267.5h1M325 92.5h1M413 77.5h1M437 62.5h1M143 410.5h1M316 72.5h1M170 328.5h1M112 374.5h1M331 67.5h1M491 80.5h1M181 380.5h1M187 263.5h1M346 58.5h1M72 405.5h1M274 308.5h1M406 67.5h1M248 263.5h1M283 291.5h1M280 135.5h1M152 343.5h1M80 402.5h1M464 68.5h1M515 70.5h1M144 373.5h1M221 250.5h1M144 386.5h1M210 414.5h1M229 273.5h1M380 78.5h1M91 366.5h1M264 265.5h1M176 355.5h1M441 52.5h1M217 403.5h1M330 73.5h1M125 399.5h1M165 367.5h1M210 291.5h1M181 413.5h1M214 389.5h1M92 410.5h1M237 298.5h1M352 95.5h1M186 262.5h1M394 58.5h1M118 415.5h1M199 390.5h1M154 323.5h1M117 409.5h1M174 295.5h1M84 412.5h1M103 382.5h1M116 412.5h1M69 394.5h1M104 345.5h1M124 372.5h1M189 418.5h1M523 82.5h1M193 395.5h1M193 262.5h1M243 268.5h1M104 414.5h1M276 306.5h1M331 83.5h1M101 360.5h1M179 280.5h1M493 72.5h1M162 276.5h1M506 90.5h1M524 72.5h1M211 410.5h1M121 363.5h1M173 274.5h1M166 400.5h1M252 300.5h1M149 360.5h1M468 67.5h1M350 56.5h1M220 369.5h1M164 297.5h1M67 401.5h1M68 395.5h1M158 376.5h1M466 94.5h1M391 77.5h1M248 286.5h1M419 84.5h1M410 81.5h1M107 380.5h1M271 297.5h1M479 58.5h1M474 65.5h1M171 394.5h1M195 358.5h1M324 87.5h1M182 368.5h1M487 47.5h1M213 387.5h1M194 290.5h1M129 363.5h1M165 382.5h1M371 55.5h1M168 282.5h1M351 61.5h1M257 291.5h1M380 48.5h1M196 405.5h1M203 273.5h1M449 89.5h1M183 368.5h1M138 385.5h1M162 407.5h1M212 299.5h1M137 417.5h1M180 419.5h1M179 406.5h1M137 423.5h1M274 294.5h1M245 303.5h1M222 413.5h1M174 274.5h1M182 352.5h1M349 95.5h1M191 382.5h1M204 304.5h1M170 276.5h1M365 79.5h1M471 58.5h1M103 338.5h1M323 95.5h1M113 347.5h1M183 307.5h1M173 386.5h1M428 60.5h1M196 321.5h1M369 93.5h1M271 300.5h1M411 57.5h1M437 76.5h1M118 405.5h1M343 71.5h1M162 384.5h1M239 307.5h1M257 268.5h1M473 71.5h1M214 376.5h1M198 369.5h1M116 356.5h1M213 371.5h1M465 85.5h1M358 63.5h1M244 298.5h1M411 79.5h1M128 421.5h1M373 95.5h1M109 375.5h1M143 376.5h1M183 405.5h1M220 274.5h1M461 72.5h1M202 381.5h1M419 59.5h1M542 70.5h1M158 404.5h1M151 367.5h1M92 392.5h1M258 304.5h1M269 269.5h1M271 293.5h1M273 289.5h1M140 358.5h1M92 364.5h1M176 337.5h1M143 387.5h1M297 81.5h1M191 329.5h1M301 87.5h1M232 245.5h1M205 278.5h1M201 404.5h1M449 54.5h1M212 257.5h1M205 382.5h1M124 409.5h1M284 262.5h1M356 63.5h1M112 370.5h1M104 368.5h1M206 276.5h1M464 74.5h1M426 48.5h1M218 275.5h1M518 76.5h1M455 72.5h1M208 297.5h1M171 375.5h1M171 280.5h1M211 313.5h1M139 383.5h1M114 397.5h1M209 378.5h1M78 409.5h1M191 280.5h1M522 60.5h1M493 89.5h1M150 358.5h1M200 394.5h1M218 401.5h1M55 407.5h1M219 295.5h1M166 371.5h1M316 65.5h1M189 278.5h1M256 277.5h1M217 278.5h1M432 92.5h1M420 70.5h1" stroke="#143a82" stroke-width="1" fill="none"/><path d="M222 300.5h1M120 379.5h1M245 289.5h1M264 251.5h1M143 371.5h1M223 294.5h1M126 381.5h1M276 139.5h1M508 60.5h1M120 414.5h1M368 48.5h1M539 79.5h1M249 276.5h1M392 85.5h1M485 88.5h1M470 84.5h1M281 278.5h1M112 393.5h1M503 65.5h1M142 399.5h1M283 253.5h1M397 50.5h1M236 300.5h1M274 284.5h1M197 304.5h1M319 88.5h1M214 373.5h1M218 371.5h1M381 67.5h1M269 255.5h1M79 390.5h1M136 376.5h1M127 374.5h1M183 409.5h1M189 301.5h1M163 390.5h1M160 364.5h1M70 415.5h1M123 387.5h1M263 264.5h1M223 267.5h1M126 390.5h1M118 378.5h1M369 81.5h1M430 53.5h1M145 342.5h1M362 79.5h1M176 327.5h1M297 75.5h1M203 369.5h1M165 400.5h1M444 90.5h1M508 78.5h1M444 92.5h1M269 294.5h1M107 404.5h1M153 350.5h1M449 66.5h1M173 416.5h1M340 73.5h1M429 89.5h1M121 380.5h1M396 89.5h1M360 79.5h1M367 67.5h1M499 76.5h1M84 412.5h1M495 64.5h1M266 260.5h1M478 67.5h1M240 268.5h1M111 389.5h1M132 346.5h1M178 368.5h1M212 384.5h1M101 360.5h1M368 47.5h1M457 68.5h1M247 306.5h1M394 58.5h1M370 87.5h1M272 294.5h1M341 78.5h1M195 411.5h1M207 369.5h1M475 52.5h1M125 386.5h1M187 375.5h1M105 388.5h1M433 69.5h1M115 410.5h1M189 312.5h1M369 93.5h1M95 370.5h1M458 93.5h1M442 54.5h1M194 301.5h1M220 319.5h1M250 303.5h1M171 383.5h1M200 286.5h1M198 400.5h1M415 56.5h1M202 389.5h1M90 395.5h1M148 375.5h1M174 394.5h1M445 86.5h1M114 392.5h1M176 325.5h1M275 249.5h1M362 87.5h1M170 379.5h1M450 87.5h1M97 363.5h1M372 81.5h1M166 271.5h1M224 279.5h1M192 399.5h1M122 376.5h1M110 405.5h1M150 338.5h1M375 75.5h1M267 285.5h1M304 72.5h1M493 88.5h1M253 272.5h1M275 130.5h1M194 383.5h1M187 355.5h1M422 88.5h1M179 391.5h1M182 377.5h1M187 273.5h1M204 375.5h1M182 406.5h1M166 347.5h1M233 310.5h1M499 69.5h1M106 400.5h1M148 411.5h1M437 82.5h1M189 288.5h1M247 297.5h1M157 361.5h1M173 407.5h1M365 91.5h1M392 50.5h1M383 50.5h1M446 65.5h1M223 248.5h1M332 93.5h1M130 379.5h1M342 92.5h1M462 69.5h1M146 413.5h1M404 52.5h1M235 264.5h1M99 409.5h1M272 273.5h1M209 383.5h1M369 82.5h1M167 314.5h1M86 408.5h1M117 340.5h1M503 84.5h1M387 61.5h1M416 78.5h1M317 65.5h1M347 56.5h1M438 82.5h1M152 381.5h1M415 57.5h1M280 300.5h1M214 402.5h1M358 64.5h1M46 410.5h1M546 73.5h1M148 353.5h1M121 348.5h1M119 382.5h1M216 372.5h1M166 381.5h1M304 72.5h1M142 355.5h1M126 337.5h1M94 379.5h1M470 58.5h1M378 68.5h1M332 61.5h1M215 279.5h1M138 406.5h1M383 64.5h1M237 267.5h1M406 50.5h1M232 284.5h1M227 308.5h1M139 332.5h1M345 61.5h1M133 395.5h1M197 377.5h1M271 285.5h1M247 270.5h1M325 89.5h1M467 47.5h1M502 71.5h1M180 322.5h1M252 269.5h1M350 60.5h1M228 317.5h1M208 418.5h1M320 68.5h1M396 88.5h1M455 89.5h1M216 375.5h1M170 395.5h1M453 72.5h1M195 411.5h1M91 387.5h1M138 380.5h1M298 76.5h1M153 347.5h1M182 308.5h1M194 322.5h1M159 347.5h1M211 307.5h1M398 65.5h1M183 310.5h1M145 330.5h1M450 53.5h1M375 61.5h1M437 57.5h1M100 346.5h1M272 146.5h1M97 365.5h1M142 330.5h1M242 252.5h1M164 394.5h1M170 380.5h1M412 55.5h1M340 54.5h1M476 76.5h1M321 82.5h1M204 370.5h1M129 339.5h1M103 391.5h1M486 69.5h1" stroke="#10306e" stroke-width="1" fill="none"/></svg>
<div class="abs" style="left:21px;top:431px;width:1024px;height:356px;background:
 linear-gradient(to right,rgba(0,3,24,.62) 0,rgba(0,3,24,.38) 120px,rgba(0,3,24,.18) 260px,rgba(0,3,24,0) 400px,rgba(0,3,24,0) 800px,rgba(0,3,24,.42) 930px,rgba(0,3,24,.62) 1024px),
 radial-gradient(ellipse 380px 50px at 600px 205px,rgba(0,62,150,.8),rgba(0,56,140,.45) 55%,rgba(0,50,130,0) 100%),
 radial-gradient(ellipse 430px 85px at 540px 262px,rgba(0,48,124,.6),rgba(0,44,116,.35) 55%,rgba(0,40,110,0) 100%),
 radial-gradient(ellipse 420px 7px at 330px 49px,rgba(20,62,150,.55),rgba(20,62,150,0) 100%),
 radial-gradient(ellipse 420px 6px at 280px 66px,rgba(20,62,150,.5),rgba(20,62,150,0) 100%),
 radial-gradient(ellipse 460px 8px at 380px 84px,rgba(20,62,150,.5),rgba(20,62,150,0) 100%),
 radial-gradient(ellipse 400px 7px at 250px 104px,rgba(20,62,150,.4),rgba(20,62,150,0) 100%),
 radial-gradient(ellipse 400px 9px at 870px 90px,rgba(14,50,130,.4),rgba(14,50,130,0) 100%),
 radial-gradient(ellipse 300px 7px at 930px 125px,rgba(14,50,130,.35),rgba(14,50,130,0) 100%),
 radial-gradient(ellipse 500px 10px at 300px 236px,rgba(0,2,20,.4),rgba(0,2,20,0) 100%),
 radial-gradient(ellipse 440px 10px at 370px 276px,rgba(0,3,26,.5),rgba(0,3,26,0) 100%),
 radial-gradient(ellipse 360px 16px at 670px 302px,rgba(0,52,134,.38),rgba(0,52,134,0) 100%),
 linear-gradient(to bottom,#02124a 0,#031656 40px,#031858 90px,#021247 130px,#011142 170px,#01164c 215px,#011548 250px,#000f42 290px,#000c3a 356px)"></div>
<svg style="left:0;top:0" width="1065" height="968" viewBox="0 0 1065 968"><path d="M262 368 H300 V446 Z" fill="#0a70ba"/><path d="M278 368 H300 V413 Z" fill="#1494d8" opacity="0.800"/></svg>
<!-- top panel -->
<div class="abs" style="left:201px;top:19px;width:664px;height:29px;background:#e9e9e9;border-left:1px solid #fff;border-bottom:1px solid #fff"></div>
<div class="abs" style="left:201px;top:48px;width:664px;height:1px;background:rgba(235,238,245,.55)"></div>
<svg style="left:0;top:0" width="1065" height="60" viewBox="0 0 1065 60">
<!-- handles -->
<g shape-rendering="crispEdges"><path d="M206 27h2v2h-2zM206 30h2v2h-2zM206 33h2v2h-2zM206 36h2v2h-2zM206 39h2v2h-2zM209 27h2v2h-2zM209 30h2v2h-2zM209 33h2v2h-2zM209 36h2v2h-2zM209 39h2v2h-2z" fill="#fff"/><path d="M206 27h1v1h-1zM206 30h1v1h-1zM206 33h1v1h-1zM206 36h1v1h-1zM206 39h1v1h-1zM209 27h1v1h-1zM209 30h1v1h-1zM209 33h1v1h-1zM209 36h1v1h-1zM209 39h1v1h-1z" fill="#8e8e8e"/><path d="M855 27h2v2h-2zM855 30h2v2h-2zM855 33h2v2h-2zM855 36h2v2h-2zM855 39h2v2h-2zM858 27h2v2h-2zM858 30h2v2h-2zM858 33h2v2h-2zM858 36h2v2h-2zM858 39h2v2h-2z" fill="#fff"/><path d="M855 27h1v1h-1zM855 30h1v1h-1zM855 33h1v1h-1zM855 36h1v1h-1zM855 39h1v1h-1zM858 27h1v1h-1zM858 30h1v1h-1zM858 33h1v1h-1zM858 36h1v1h-1zM858 39h1v1h-1z" fill="#8e8e8e"/></g>
<g stroke="#b4b4b4" stroke-width="1"><path d="M409 30.500h3.500 M409 34.500h3.500 M409 38.500h3.500"/></g>
<g stroke="#fff" stroke-width="1"><path d="M409 31.500h3.500 M409 35.500h3.500 M409 39.500h3.500"/></g>
<!-- separators -->
<path d="M290.500 25v17 M770.500 25v17 M818.500 25v17" stroke="#cfcfcf" stroke-width="1"/>
<path d="M291.500 25v17 M771.500 25v17 M819.500 25v17" stroke="#f8f8f8" stroke-width="1"/>
<!-- menu orb -->
<use href="#orb" x="220.400" y="23.600" width="20.800" height="20.800"/>
<!-- launchers -->
<g>
 <rect x="298.800" y="23.800" width="20.400" height="20.800" rx="2" fill="url(#gFrame)"/>
 <rect x="298.800" y="42.600" width="20.400" height="2" rx="1" fill="#9a9a9a" opacity="0.700"/>
 <rect x="300.600" y="25.600" width="16.800" height="16.400" rx="1" fill="url(#gTerm)"/>
 <path d="M303.400 29.200 l4.200 2.200 -4.200 2.200" stroke="#fff" stroke-width="1.500" fill="none"/>
 <rect x="307.800" y="34.400" width="4" height="1.400" fill="#fff"/>
</g>
<g transform="translate(327,23.500)">
 <rect x="0" y="0.500" width="20.400" height="20.400" rx="2.500" fill="#fafafa" stroke="#cfcfcf" stroke-width="0.800"/>
 <rect x="0.400" y="18.600" width="19.600" height="2.300" rx="1.100" fill="#c2c2c2"/>
 <path d="M2.500 3.300h1.500 M5.500 3.300h1.500 M8.500 3.300h1.500 M14.500 3.300h1.500 M17.200 3.300h1.500" stroke="#555" stroke-width="1.300"/>
 <g stroke="#4a66c8" stroke-width="0.900" opacity="0.85"><path d="M2.600 6.500h11 M2.600 9.700h9 M2.600 12.900h11.500 M2.600 16h12 M2.600 18.600h5"/></g>
 <path d="M11.200 3.400 L14.400 4.600 L9.300 16.500 L7 18.400 L6.800 15.500 Z" fill="#f0a020"/>
 <path d="M12.300 3.900 L13.400 4.300 L8.400 16.200 L7.400 15.800 Z" fill="#ffd070"/>
 <path d="M11.600 2.300 q1.800 -1.800 3.400 0.300 l-0.700 2 l-3.200 -1.200z" fill="#f03c3c"/>
 <path d="M6.800 15.500 l2.500 1 l-2.300 1.900z" fill="#e8c898"/><path d="M7 18.400 l0.100 -1.300 l1 0.400z" fill="#333"/>
 <path d="M10 17 q5 -3 9 -5 l-2 4 q-4 0 -7 1z" fill="#bbb" opacity="0.450"/>
</g>
<use href="#hammer" x="354.800" y="23.800" width="20.600" height="20.800"/>
<g transform="translate(383,23.800)">
 <rect x="0" y="0" width="20.200" height="20.400" rx="2.200" fill="#2b7cd2"/>
 <rect x="0" y="19" width="20.200" height="1.400" rx="0.700" fill="#1c58a4" opacity="0.700"/>
 <path d="M10 2.200 L12.200 7.600 L17.800 10 L12.200 12.400 L10 18 L7.800 12.400 L2.200 10 L7.800 7.600 Z" fill="#fff"/>
 <path d="M4 4 l3.400 3 M16 4 l-3.400 3 M4 16 l3.400 -3 M16 16 l-3.400 -3" stroke="#9cc8f4" stroke-width="0.700" opacity="0.800"/>
 <circle cx="10" cy="10" r="2.100" fill="#2b7cd2"/>
</g>
</svg>
<div class="abs" style="left:244px;top:26px;height:16px;line-height:16px;font-size:13px;color:#1c1c1c">Menu</div>
<!-- task button -->
<div class="abs" style="left:416px;top:21px;width:197px;height:26px;border:1px solid #98a2be;border-radius:3.500px;background:linear-gradient(to bottom,#c9cfe1 0,#bcc4da 55%,#aeb8d3 100%);box-shadow:inset 0 0 0 1px rgba(255,255,255,.25)"></div>
<svg style="left:420px;top:27px" width="16" height="16" viewBox="0 0 22 22"><use href="#netsm" width="22" height="22"/></svg>
<div class="abs" style="left:442px;top:26px;height:16px;line-height:16px;font-size:13px;color:#1c1c1c;white-space:nowrap">Network - File Manager</div>
<!-- systray and right side of panel -->
<svg style="left:0;top:0" width="1065" height="60" viewBox="0 0 1065 60">
<!-- network monitor -->
<g>
 <rect x="622.600" y="24.800" width="16" height="10.400" fill="#1a1a1a"/><rect x="623.600" y="25.800" width="14" height="2.200" fill="#000"/>
 <rect x="622.600" y="34.600" width="16" height="1.600" fill="#c8c8c8"/>
 <path d="M636.600 32 h1.600 v1.600 h-1.600z" fill="#70d030"/>
 <rect x="617.600" y="28.800" width="16.400" height="10" fill="#151515"/><rect x="618.600" y="29.800" width="14.400" height="8" fill="#080808"/>
 <path d="M618.600 29.800 h14.400 v3 q-8 0 -14.400 3z" fill="#3a3a3a" opacity="0.600"/>
 <rect x="617.600" y="38.200" width="16.400" height="1.600" fill="#cacaca"/>
 <rect x="623.400" y="39.800" width="5" height="2.400" fill="#222"/><rect x="619.600" y="42" width="12.600" height="1.600" fill="#2c2c2c"/>
 <path d="M626.600 33.400 l2.400 -1.600 l8.600 6.400 l-1.400 2.600 l-2 0.400z" fill="#f4f4f4" stroke="#a8a8a8" stroke-width="0.500"/>
 <path d="M626.200 33 l2.600 -1.800 l1.600 1.200 l-2.600 2z" fill="#e8c060"/>
 <path d="M635.600 39.600 l2.600 2 l1 -1.400 l-2.200 -2z" fill="#909090"/>
</g>
<!-- muted speaker -->
<g opacity="0.900">
 <path d="M649 31.600 h3.400 l6.400 -6.200 q3.400 8.800 0 17.200 l-6.400 -6 h-3.400z" fill="#d2d2d2"/>
 <ellipse cx="660.400" cy="33.600" rx="6" ry="8.800" fill="#d9d9d9"/>
 <ellipse cx="660.800" cy="33.600" rx="4.200" ry="6.800" fill="#cdcdcd"/>
 <ellipse cx="661" cy="33.600" rx="1.800" ry="2.600" fill="#dcdcdc"/>
</g>
<use href="#trash" x="678.400" y="23.200" width="21.800" height="22"/>
<rect x="679.400" y="24.200" width="19.800" height="20" rx="2" fill="#000" fill-opacity="0.090" stroke="#8e8e8e" stroke-width="0.900"/>
<!-- pager -->
<rect x="704" y="21" width="34" height="26" fill="#5a78c4"/>
<rect x="713" y="24.500" width="22" height="16.500" fill="#fff" stroke="#000" stroke-width="1"/>
<use href="#deskicon" x="743.800" y="25.200" width="19" height="18.600"/>
<!-- logout -->
<path d="M842.600 30.400 A5.200 5.200 0 1 0 842.600 37.200" fill="none" stroke="#1e1e1e" stroke-width="2"/>
<path d="M837.400 33.800 h7" stroke="#1e1e1e" stroke-width="2"/>
</svg>
<div class="abs" style="left:777px;top:26px;height:16px;line-height:16px;font-size:13px;color:#1c1c1c">19:22</div>
<!-- desktop icons -->
<style>
.dl{position:absolute;left:17px;width:141px;text-align:center;height:16px;line-height:16px;font-size:13px;color:#f4f4f4;text-shadow:1px 1px 1px rgba(0,0,0,.9);white-space:nowrap}
</style>
<svg style="left:0;top:0" width="200" height="700" viewBox="0 0 200 700">
<use href="#homefolder" x="71" y="78" width="34.200" height="34"/>
<use href="#trash" x="71" y="180" width="34.200" height="34"/>
<use href="#drive" x="71" y="282" width="34.200" height="34"/>
<use href="#orb" x="70" y="382.300" width="36" height="36"/>
<use href="#orb" x="70" y="484.300" width="36" height="36"/>
<use href="#orb" x="70" y="586.300" width="36" height="36"/>
</svg>
<div class="dl" style="top:124px">Home</div>
<div class="dl" style="top:226px">Trash</div>
<div class="dl" style="top:328px">File System</div>
<div class="dl" style="top:430px">Vector-Docs</div>
<div class="dl" style="top:532px">Help forum</div>
<div class="dl" style="top:634px">Vector-Tutor...</div>
<!-- mouse pointer -->
<svg style="left:188px;top:366px" width="14" height="20" viewBox="0 0 14 20"><path d="M1.500 1.500 L1.500 14.200 L4.500 11.500 L6.800 16.600 L9 15.600 L6.800 10.700 L10.800 10.700 Z" fill="#000" stroke="#fff" stroke-width="1.100" stroke-linejoin="round"/></svg>
<!-- file manager window -->
<style>
.win{position:absolute;left:284px;top:95px;width:654px;height:512px;background:#e8e8e8;border-radius:7px 7px 5px 5px;
 box-shadow:inset 1px 0 0 #f6f6f6,inset -1px 0 0 #d2d2d2,inset 0 -1px 0 #d0d0d0}
.wt{position:absolute;height:16px;line-height:16px;font-size:13px;color:#1a1a1a;white-space:nowrap}
.sb{position:absolute;left:330px}
.il{position:absolute;width:122px;text-align:center;height:16px;line-height:16px;font-size:13px;color:#1a1a1a;white-space:nowrap}
</style>
<div class="win"></div>
<div class="abs" style="left:284px;top:95px;width:654px;height:25px;border-radius:7px 7px 0 0;background:linear-gradient(to bottom,#ffffff 0,#fbfbfb 30%,#f1f1f1 48%,#e8e8e8 56%,#e8e8e8 100%)"></div>
<div class="abs" style="left:926px;top:120px;width:12px;height:480px;background:linear-gradient(to right,rgba(232,232,232,0) 0,rgba(225,225,225,1) 60%,rgba(216,216,216,1) 100%)"></div>
<div class="wt" style="left:504px;top:102px;font-size:12px;font-weight:bold;height:15px;line-height:15px;color:#111">Network - File Manager</div>
<svg style="left:0;top:0" width="1065" height="130" viewBox="0 0 1065 130">
<path d="M302.800 103.600 L307.600 108.400 L312.400 103.600" fill="none" stroke="#6c6c6c" stroke-width="2.300"/>
<defs><linearGradient id="gBtn" x1="0" y1="0" x2="0" y2="1"><stop offset="0" stop-color="#8a8a8a"/><stop offset="0.5" stop-color="#727272"/><stop offset="1" stop-color="#5c5c5c"/></linearGradient></defs>
<path d="M852.500 95 H920.500 V111 q0 2.500 -2.500 2.500 H855 q-2.500 0 -2.500 -2.500z" fill="url(#gBtn)" stroke="#3c3c3c" stroke-width="1"/>
<path d="M875 95 V113.500 M898 95 V113.500" stroke="#3c3c3c" stroke-width="1.200"/>
<path d="M876.200 95.500 V113 M899.200 95.500 V113 M853.700 95.500 V112" stroke="#9a9a9a" stroke-width="0.800" opacity="0.700"/>
<rect x="858.600" y="104.400" width="9.800" height="3" fill="#dcdcdc"/>
<rect x="882.400" y="100" width="8.400" height="6.600" fill="#8a8a8a" stroke="#dcdcdc" stroke-width="1.500"/>
<path d="M906.200 100 l7 7 M913.200 100 l-7 7" stroke="#dcdcdc" stroke-width="2.600"/>
</svg>
<!-- menubar -->
<div class="abs" style="left:291px;top:120px;width:640px;height:23px;background:#c4cbde"></div>
<div class="wt" style="left:297px;top:124px">File</div>
<div class="wt" style="left:331px;top:124px">Edit</div>
<div class="wt" style="left:368px;top:124px">View</div>
<div class="wt" style="left:412px;top:124px">Go</div>
<div class="wt" style="left:442px;top:124px">Help</div>
<!-- sidebar -->
<div class="abs" style="left:297px;top:149px;width:170px;height:424px;background:#f5f5f5;border:1px solid #9e9e9e"></div>
<div class="abs" style="left:298px;top:254px;width:168px;height:26px;background:#b5c5e9"></div>
<svg style="left:0;top:0" width="480" height="300" viewBox="0 0 480 300">
<use href="#homesm" x="301" y="152" width="22" height="22"/>
<use href="#deskicon" x="301.600" y="179.200" width="20.800" height="20.600"/>
<use href="#trash" x="301.200" y="204.600" width="21.600" height="21.800"/>
<rect x="302.200" y="205.600" width="19.600" height="19.800" rx="2" fill="#000" fill-opacity="0.090" stroke="#8e8e8e" stroke-width="0.900"/>
<use href="#drivesm" x="301" y="230" width="22" height="22"/>
<use href="#netsm" x="301" y="256" width="22" height="22"/>
</svg>
<div class="wt sb" style="top:155px">ken</div>
<div class="wt sb" style="top:181px">Desktop</div>
<div class="wt sb" style="top:207px">Trash</div>
<div class="wt sb" style="top:233px">File System</div>
<div class="wt sb" style="top:259px">Network</div>
<!-- location button -->
<div class="abs" style="left:471px;top:150px;width:90px;height:27px;border:1px solid #a3abc4;border-radius:3.500px;background:linear-gradient(to bottom,#d0d5e5 0,#c6ccdf 50%,#bcc4da 100%)"></div>
<svg style="left:476px;top:156px" width="16" height="16" viewBox="0 0 22 22"><use href="#netsm" width="22" height="22"/></svg>
<div class="wt" style="left:496px;top:157px;font-weight:bold;color:#111">Network</div>
<!-- main pane -->
<div class="abs" style="left:470px;top:184px;width:455px;height:389px;background:#f5f5f5;border:1px solid #a0a0a0"></div>
<svg style="left:0;top:0" width="1065" height="400" viewBox="0 0 1065 400">
<use href="#server" x="511" y="195" width="48" height="48"/>
<use href="#server" x="633" y="195" width="48" height="48"/>
<use href="#server" x="755" y="195" width="48" height="48"/>
<use href="#server" x="511" y="278" width="48" height="48"/>
<use href="#server" x="633" y="278" width="48" height="48"/>
<use href="#netgrp" x="757" y="280.400" width="43.600" height="43.200" style="--mb:#a9b9e8"/>
</svg>
<div class="il" style="left:474px;top:249px">64bitHPNivdiaB1</div>
<div class="il" style="left:596px;top:249px">RC1aspire1</div>
<div class="il" style="left:718px;top:249px">vector</div>
<div class="il" style="left:474px;top:332px">vector-2</div>
<div class="il" style="left:596px;top:332px">vectoracer1</div>
<div class="abs" style="left:747px;top:329px;width:63px;height:38px;border-radius:4px;background:#a6b8ea"></div>
<div class="wt" style="left:749px;top:332px">Windows</div>
<div class="wt" style="left:749px;top:349px">Network</div>
<div class="abs" style="left:467px;top:358px;width:3px;height:1px;background:#c0c0c0;box-shadow:0 3px 0 #c0c0c0,0 6px 0 #c0c0c0,0 1px 0 #f6f6f6,0 4px 0 #f6f6f6,0 7px 0 #f6f6f6"></div>
<!-- statusbar -->
<div class="abs" style="left:291px;top:579px;width:622px;height:1px;background:#d2d2d2"></div>
<div class="abs" style="left:291px;top:580px;width:622px;height:1px;background:#f2f2f2"></div>
<div class="wt" style="left:293px;top:582px">"Windows Network" shortcut</div>
<svg style="left:915px;top:584px" width="16" height="16" viewBox="0 0 16 16"><g fill="#fbfbfb"><path d="M13 3h1.400v1.400h-1.400z M10 6h1.400v1.400h-1.400z M13 6h1.400v1.400h-1.400z M7 9h1.400v1.400h-1.400z M10 9h1.400v1.400h-1.400z M13 9h1.400v1.400h-1.400z M4 12h1.400v1.400h-1.400z M7 12h1.400v1.400h-1.400z M10 12h1.400v1.400h-1.400z M13 12h1.400v1.400h-1.400z"/></g><g fill="#c6c6c6"><path d="M12.500 2.500h1v1h-1z M9.500 5.500h1v1h-1z M12.500 5.500h1v1h-1z M6.500 8.500h1v1h-1z M9.500 8.500h1v1h-1z M12.500 8.500h1v1h-1z M3.500 11.500h1v1h-1z M6.500 11.500h1v1h-1z M9.500 11.500h1v1h-1z M12.500 11.500h1v1h-1z"/></g></svg>
<!-- dock -->
<svg style="left:0;top:0" width="1065" height="968" viewBox="0 0 1065 968">
<defs>
<radialGradient id="gGlobe" cx="0.350" cy="0.250" r="0.800"><stop offset="0" stop-color="#b8ecff"/><stop offset="0.350" stop-color="#48a8e8"/><stop offset="0.800" stop-color="#1458b8"/><stop offset="1" stop-color="#0a2c78"/></radialGradient>
<linearGradient id="gFox" x1="0.200" y1="0" x2="0.700" y2="1"><stop offset="0" stop-color="#f8982a"/><stop offset="0.400" stop-color="#f07018"/><stop offset="0.750" stop-color="#e85810"/><stop offset="1" stop-color="#f8a020"/></linearGradient>
<linearGradient id="gCalc" x1="0" y1="0" x2="0" y2="1"><stop offset="0" stop-color="#eeece6"/><stop offset="1" stop-color="#c6c2b8"/></linearGradient>
<linearGradient id="gBubble" x1="0" y1="0" x2="0" y2="1"><stop offset="0" stop-color="#ffffff"/><stop offset="0.500" stop-color="#eef3fb"/><stop offset="1" stop-color="#c4d4ec"/></linearGradient>
<linearGradient id="gBird" x1="0" y1="0" x2="0.300" y2="1"><stop offset="0" stop-color="#a468b8"/><stop offset="0.500" stop-color="#9050a8"/><stop offset="1" stop-color="#8a48a4"/></linearGradient>
<linearGradient id="gDesk6" x1="0" y1="0" x2="1" y2="1"><stop offset="0" stop-color="#a44a28"/><stop offset="0.450" stop-color="#862410"/><stop offset="1" stop-color="#64100a"/></linearGradient>
<linearGradient id="gWheelHi" x1="0" y1="0" x2="0" y2="1"><stop offset="0" stop-color="#fff" stop-opacity="0.220"/><stop offset="0.500" stop-color="#fff" stop-opacity="0"/><stop offset="1" stop-color="#000" stop-opacity="0.120"/></linearGradient>
<linearGradient id="gSw" x1="0" y1="0" x2="1" y2="0"><stop offset="0" stop-color="#4a4a4a"/><stop offset="0.500" stop-color="#222"/><stop offset="1" stop-color="#000"/></linearGradient>
<radialGradient id="gOFolder" cx="0.250" cy="0.200" r="1"><stop offset="0" stop-color="#fcc450"/><stop offset="0.600" stop-color="#f0a030"/><stop offset="1" stop-color="#e48a1c"/></radialGradient>
<linearGradient id="gCur" x1="0" y1="0" x2="1" y2="1"><stop offset="0" stop-color="#ffffff"/><stop offset="1" stop-color="#bdbdbd"/></linearGradient>
<linearGradient id="gPlayO" x1="0" y1="0" x2="0" y2="1"><stop offset="0" stop-color="#8ca4e8"/><stop offset="0.250" stop-color="#5a8cdc"/><stop offset="1" stop-color="#2e68b8"/></linearGradient>
<linearGradient id="gPlayI" x1="0" y1="0" x2="0" y2="1"><stop offset="0" stop-color="#3a5498"/><stop offset="1" stop-color="#4664ac"/></linearGradient>
<radialGradient id="gPow" cx="0.350" cy="0.250" r="0.900"><stop offset="0" stop-color="#f47c68"/><stop offset="0.450" stop-color="#e03838"/><stop offset="1" stop-color="#b81838"/></radialGradient>
<radialGradient id="gCloud" cx="0.500" cy="0.350" r="0.700"><stop offset="0" stop-color="#ffffff"/><stop offset="0.700" stop-color="#f2f2f2"/><stop offset="1" stop-color="#d2d2d2"/></radialGradient>
<linearGradient id="gSpkB" x1="0" y1="0" x2="1" y2="0.300"><stop offset="0" stop-color="#a8a8a4"/><stop offset="0.400" stop-color="#f4f4f2"/><stop offset="1" stop-color="#8c8c88"/></linearGradient>
<linearGradient id="gSpkC" x1="0" y1="0" x2="1" y2="1"><stop offset="0" stop-color="#5e605a"/><stop offset="0.500" stop-color="#7a7c76"/><stop offset="1" stop-color="#50524c"/></linearGradient>
<linearGradient id="gVol" x1="0" y1="0" x2="1" y2="0"><stop offset="0" stop-color="#ff0000"/><stop offset="0.350" stop-color="#f03000"/><stop offset="1" stop-color="#88b000"/></linearGradient>
<linearGradient id="gPlane" x1="0" y1="0" x2="0" y2="1"><stop offset="0" stop-color="#70789a"/><stop offset="0.400" stop-color="#7c84a0"/><stop offset="1" stop-color="#848ca6"/></linearGradient>
<linearGradient id="gPlaneLow" x1="0" y1="0" x2="0" y2="1"><stop offset="0" stop-color="#636b85"/><stop offset="1" stop-color="#575f78"/></linearGradient>
<linearGradient id="gGlossEdge" x1="0" y1="0" x2="0" y2="1"><stop offset="0" stop-color="#fff" stop-opacity="0"/><stop offset="1" stop-color="#fff" stop-opacity="0.080"/></linearGradient>
<linearGradient id="gRefl" x1="0" y1="768" x2="0" y2="787" gradientUnits="userSpaceOnUse"><stop offset="0" stop-color="#fff" stop-opacity="0.450"/><stop offset="1" stop-color="#fff" stop-opacity="0.120"/></linearGradient>
<mask id="mRefl" maskUnits="userSpaceOnUse" x="180" y="760" width="720" height="30"><rect x="180" y="760" width="720" height="30" fill="url(#gRefl)"/></mask>
<clipPath id="cpPlane"><path d="M213 747 V759.200 L184.400 786.500 H885.600 L845 747z"/></clipPath>
<radialGradient id="gGlow" cx="0.500" cy="0.500" r="0.500"><stop offset="0" stop-color="#ffffff"/><stop offset="0.350" stop-color="#c8e0ff" stop-opacity="0.900"/><stop offset="1" stop-color="#6aa0ff" stop-opacity="0"/></radialGradient>
</defs>
<path d="M213 747 V759.200 L184.400 786.500 H885.600 L845 747z" fill="url(#gPlane)"/>
<g clip-path="url(#cpPlane)">
<path d="M180 748 H213 C 240 766 300 772 400 778.500 C 480 779 560 770 640 767.500 C 720 765 790 765 868 771 L 900 774 V748z" fill="url(#gGlossEdge)"/>
<path d="M180 758 L213 762 C 240 766 300 772 400 778.500 C 480 779 560 770 640 767.500 C 720 765 790 765 868 771 L 900 774 V790 H180z" fill="url(#gPlaneLow)"/>
<path d="M286.5 749.5 h4 l-2.1 2.2 h-4z" fill="#b4bac8" opacity="0.400"/>
<path d="M281.5 755.0 h5.5 l-2.7 2.8 h-5.5z" fill="#b4bac8" opacity="0.400"/>
<path d="M275.5 761.5 h7.5 l-3.4 3.6 h-7.5z" fill="#b4bac8" opacity="0.400"/>
<path d="M268.0 769.5 h10 l-4.2 4.4 h-10z" fill="#b4bac8" opacity="0.400"/>
<path d="M258.5 779.0 h13 l-5.2 5.5 h-13z" fill="#b4bac8" opacity="0.400"/>
<g mask="url(#mRefl)">
<g transform="translate(0,1535.500) scale(1,-1)"><use href="#hammer" x="226.800" y="728.800" width="37.400" height="37.400"/></g>
<g transform="translate(0,1535.500) scale(1,-1)"><use href="#term" x="286.800" y="728.800" width="37.400" height="37.400"/></g>
<g transform="translate(0,1535.500) scale(1,-1)"><g>
<circle cx="353.500" cy="742.500" r="15" fill="url(#gGlobe)"/>
<path d="M344 731 q4 -3 8 -2 q-1 3 -4 5 q-3 0 -4 -3z M356 733 q5 -1 8 3 q2 5 0 9 q-4 -1 -5 -5 q-3 -3 -3 -7z M351 744 q4 0 5 4 q-3 2 -5 -1z" fill="#2a70c0" opacity="0.600"/>
<path d="M335 731.300 L337.500 735 Q341 732.500 347.500 732.200 L345.500 735.500 Q349 736.500 351 738.500 Q347.500 739.500 346 741 Q348 742 348.500 744 Q345 743.500 343.500 745.500 Q343 749 346 751 Q350 752.500 355.500 749.800 Q353 754 347.500 754 Q352 758.500 358.500 757.500 Q366 755 368 745 Q369 738 365 730 Q372.500 736 372 745 Q371.500 757 361 763.500 Q352 768 342 763 Q332 757 331.600 746 Q331.500 739 334 736 Q333.800 733 335 731.300 Z" fill="url(#gFox)"/>
<path d="M365 730 Q372.500 736 372 745 Q371.500 756 362 762.500 Q367 755 368 746 Q368.800 738 365 730z" fill="#fcc828" opacity="0.850"/>
<path d="M362.500 729.500 l3 1.500 l-1 2z M369.500 734 l2.500 1 l-1.500 2z" fill="#f8b020"/>
<path d="M338 735.500 Q341.500 733 347 732.600 L345 735.600 Q341.500 735 338 737z" fill="#fde0b0" opacity="0.550"/>
<path d="M333 752 Q338 764 352 765.600 Q340 766 334.500 758z" fill="#d84c0c" opacity="0.600"/>
</g></g>
<g transform="translate(0,1535.500) scale(1,-1)"><g><rect x="378.800" y="728.800" width="37.400" height="37.400" rx="3" fill="url(#gCalc)"/><rect x="378.800" y="763" width="37.400" height="3.200" rx="1.600" fill="#9c968c" opacity="0.700"/><rect x="383.600" y="732.200" width="27.600" height="8.800" rx="1" fill="#c3cb98" stroke="#8c9070" stroke-width="0.800"/><text x="409.500" y="740" font-size="8" font-family="DejaVu Sans Mono, Liberation Mono, monospace" fill="#4a5030" text-anchor="end">0</text><rect x="383.2" y="744.2" width="5.600" height="3.400" rx="0.600" fill="#3c3a38"/><rect x="385.0" y="745.2" width="2" height="1.400" fill="#fff" opacity="0.750"/><rect x="390.9" y="744.2" width="5.600" height="3.400" rx="0.600" fill="#3c3a38"/><rect x="392.7" y="745.2" width="2" height="1.400" fill="#fff" opacity="0.750"/><rect x="398.6" y="744.2" width="5.600" height="3.400" rx="0.600" fill="#3c3a38"/><rect x="400.4" y="745.2" width="2" height="1.400" fill="#fff" opacity="0.750"/><rect x="406.3" y="744.2" width="5.600" height="3.400" rx="0.600" fill="#c02828"/><rect x="408.1" y="745.2" width="2" height="1.400" fill="#fff" opacity="0.750"/><rect x="383.2" y="749.5" width="5.600" height="3.400" rx="0.600" fill="#3c3a38"/><rect x="385.0" y="750.5" width="2" height="1.400" fill="#fff" opacity="0.750"/><rect x="390.9" y="749.5" width="5.600" height="3.400" rx="0.600" fill="#3c3a38"/><rect x="392.7" y="750.5" width="2" height="1.400" fill="#fff" opacity="0.750"/><rect x="398.6" y="749.5" width="5.600" height="3.400" rx="0.600" fill="#3c3a38"/><rect x="400.4" y="750.5" width="2" height="1.400" fill="#fff" opacity="0.750"/><rect x="406.3" y="749.5" width="5.600" height="3.400" rx="0.600" fill="#8c7c6c"/><rect x="408.1" y="750.5" width="2" height="1.400" fill="#fff" opacity="0.750"/><rect x="383.2" y="754.8" width="5.600" height="3.400" rx="0.600" fill="#3c3a38"/><rect x="385.0" y="755.8" width="2" height="1.400" fill="#fff" opacity="0.750"/><rect x="390.9" y="754.8" width="5.600" height="3.400" rx="0.600" fill="#3c3a38"/><rect x="392.7" y="755.8" width="2" height="1.400" fill="#fff" opacity="0.750"/><rect x="398.6" y="754.8" width="5.600" height="3.400" rx="0.600" fill="#3c3a38"/><rect x="400.4" y="755.8" width="2" height="1.400" fill="#fff" opacity="0.750"/><rect x="406.3" y="754.8" width="5.600" height="3.400" rx="0.600" fill="#8c7c6c"/><rect x="408.1" y="755.8" width="2" height="1.400" fill="#fff" opacity="0.750"/><rect x="383.2" y="760.1" width="5.600" height="3.400" rx="0.600" fill="#3c3a38"/><rect x="385.0" y="761.1" width="2" height="1.400" fill="#fff" opacity="0.750"/><rect x="390.9" y="760.1" width="5.600" height="3.400" rx="0.600" fill="#8c7c6c"/><rect x="392.7" y="761.1" width="2" height="1.400" fill="#fff" opacity="0.750"/><rect x="398.6" y="760.1" width="5.600" height="3.400" rx="0.600" fill="#8c7c6c"/><rect x="400.4" y="761.1" width="2" height="1.400" fill="#fff" opacity="0.750"/><rect x="406.3" y="760.1" width="5.600" height="3.400" rx="0.600" fill="#f08820"/><rect x="408.1" y="761.1" width="2" height="1.400" fill="#fff" opacity="0.750"/></g></g>
<g transform="translate(0,1535.500) scale(1,-1)"><g>
<path d="M439 727.300 h20.500 q4 0 4 4 v14.500 q0 4 -4 4 h-3 l-3.500 4.200 v-4.200 h-14 q-4 0 -4 -4 v-14.500 q0 -4 4 -4z" fill="url(#gBubble)"/>
<path d="M431.500 735.500 q2 -2.500 6 -2.200 q-2 0.500 -2.500 2z" fill="#8a4aa0"/>
<path d="M438 733.600 q8.500 0 10.500 9 q0.800 5 -0.500 9 q-0.500 4 3 8 q2.500 2.500 2.800 5.400 h-30.300 q0.500 -4 2.500 -8 q2.500 -6 2 -12 q0.500 -11.400 10 -11.400z" fill="url(#gBird)" stroke="#6e3290" stroke-width="0.700"/>
<ellipse cx="436" cy="740.500" rx="6" ry="3.500" fill="#c8a0dc" opacity="0.350"/>
<circle cx="432.600" cy="745.400" r="3.100" fill="#fff"/><circle cx="445" cy="745.400" r="3.100" fill="#fff"/>
<circle cx="432.600" cy="745.600" r="1.300" fill="#6a2a88"/><circle cx="445" cy="745.600" r="1.300" fill="#6a2a88"/>
<path d="M433.200 750.400 l5.400 -1.400 l6.400 1.400 l-5 5.800z" fill="#f0a020"/><path d="M438.600 749 l6.400 1.400 l-5 5.800z" fill="#e08810"/>
</g></g>
<g transform="translate(0,1535.500) scale(1,-1)"><g>
<rect x="469.800" y="726.800" width="47.600" height="38" fill="#f2f2f2"/>
<rect x="469.800" y="762.800" width="47.600" height="2" fill="#cfcfcf"/>
<rect x="473" y="730" width="41.200" height="31.600" fill="url(#gDesk6)"/>
<path d="M473 730 h41.200 v8 q-22 6 -41.200 16z" fill="#fff" opacity="0.080"/>
<path d="M477.200 733 h7 l3 3 v8 h-10z M477.200 747.800 h7 l3 3 v8 h-10z" fill="#ececec"/>
<path d="M484.200 733 l3 3 h-3z M484.200 747.800 l3 3 h-3z" fill="#bcbcbc"/>
</g></g>
<g transform="translate(0,1535.500) scale(1,-1)"><g><clipPath id="cpw2"><rect x="525" y="729" width="37.2" height="37" rx="2.500"/></clipPath><g clip-path="url(#cpw2)"><path d="M543.4 746.8 Q535.5 731.7 541.0 712.9 L558.3 716.2 Q544.1 729.8 543.4 746.8z" fill="#f03838" stroke="#2a1a30" stroke-opacity="0.45" stroke-width="0.500"/><path d="M543.4 746.8 Q544.1 729.8 558.3 716.2 L571.6 727.8 Q552.5 732.4 543.4 746.8z" fill="#f66a28" stroke="#2a1a30" stroke-opacity="0.45" stroke-width="0.500"/><path d="M543.4 746.8 Q552.5 732.4 571.6 727.8 L577.3 744.4 Q558.5 738.9 543.4 746.8z" fill="#fa9a20" stroke="#2a1a30" stroke-opacity="0.45" stroke-width="0.500"/><path d="M543.4 746.8 Q558.5 738.9 577.3 744.4 L574.0 761.7 Q560.4 747.5 543.4 746.8z" fill="#fcd818" stroke="#2a1a30" stroke-opacity="0.45" stroke-width="0.500"/><path d="M543.4 746.8 Q560.4 747.5 574.0 761.7 L562.4 775.0 Q557.8 755.9 543.4 746.8z" fill="#d8e818" stroke="#2a1a30" stroke-opacity="0.45" stroke-width="0.500"/><path d="M543.4 746.8 Q557.8 755.9 562.4 775.0 L545.8 780.7 Q551.3 761.9 543.4 746.8z" fill="#7cd020" stroke="#2a1a30" stroke-opacity="0.45" stroke-width="0.500"/><path d="M543.4 746.8 Q551.3 761.9 545.8 780.7 L528.5 777.4 Q542.7 763.8 543.4 746.8z" fill="#20b838" stroke="#2a1a30" stroke-opacity="0.45" stroke-width="0.500"/><path d="M543.4 746.8 Q542.7 763.8 528.5 777.4 L515.2 765.8 Q534.3 761.2 543.4 746.8z" fill="#18b0c8" stroke="#2a1a30" stroke-opacity="0.45" stroke-width="0.500"/><path d="M543.4 746.8 Q534.3 761.2 515.2 765.8 L509.5 749.2 Q528.3 754.7 543.4 746.8z" fill="#2060e0" stroke="#2a1a30" stroke-opacity="0.45" stroke-width="0.500"/><path d="M543.4 746.8 Q528.3 754.7 509.5 749.2 L512.8 731.9 Q526.4 746.1 543.4 746.8z" fill="#3828b8" stroke="#2a1a30" stroke-opacity="0.45" stroke-width="0.500"/><path d="M543.4 746.8 Q526.4 746.1 512.8 731.9 L524.4 718.6 Q529.0 737.7 543.4 746.8z" fill="#7a28b0" stroke="#2a1a30" stroke-opacity="0.45" stroke-width="0.500"/><path d="M543.4 746.8 Q529.0 737.7 524.4 718.6 L541.0 712.9 Q535.5 731.7 543.4 746.8z" fill="#c038b0" stroke="#2a1a30" stroke-opacity="0.45" stroke-width="0.500"/><rect x="525" y="729" width="37.2" height="37" fill="url(#gWheelHi)"/></g></g></g>
<g transform="translate(0,1535.500) scale(1,-1)"><g>
<rect x="568.500" y="726" width="41.800" height="42" fill="#c4c8d2"/>
<rect x="570.400" y="728.200" width="38" height="37.800" fill="url(#gSw)"/>
<rect x="579.800" y="733" width="25.200" height="24" fill="#b89858"/>
<use href="#hammer" x="581.600" y="734.600" width="21.600" height="21"/>
</g></g>
<g transform="translate(0,1535.500) scale(1,-1)"><g>
<path d="M616.400 735.200 q0 -2 2 -2 h12.600 q1.200 0 2 1 l1.800 2 h18.400 q1.800 0 1.800 1.800 v6 h-38.600z" fill="#f4f4f4"/>
<rect x="619" y="735" width="11" height="2" rx="0.800" fill="#f4ac48"/>
<rect x="615.400" y="740" width="40.600" height="25.800" rx="1.800" fill="url(#gOFolder)"/>
<path d="M615.400 741.800 q0 -1.800 1.800 -1.800 h37 q1.800 0 1.800 1.800 v8 q-20 2 -40.600 9z" fill="#fff" opacity="0.130"/>
<path d="M640.600 743.600 V765.400 L645.400 761 L648.600 768 L652 766.600 L648.800 759.600 L655.200 758.600 Z" fill="url(#gCur)" stroke="#8c8c8c" stroke-width="0.500"/>
</g></g>
<g transform="translate(0,1535.500) scale(1,-1)"><g>
<circle cx="681.100" cy="747.800" r="17.400" fill="url(#gPlayO)"/>
<circle cx="681.100" cy="747.800" r="16.800" fill="none" stroke="#2c5ca8" stroke-width="1" opacity="0.600"/>
<circle cx="681.100" cy="747.800" r="10.800" fill="url(#gPlayI)"/>
<path d="M677.700 741.700 V753.300 L687.700 747.500z" fill="#fff"/>
</g></g>
<g transform="translate(0,1535.500) scale(1,-1)"><g>
<rect x="710" y="730.500" width="34.900" height="35" rx="2.200" fill="url(#gPow)"/>
<rect x="710.500" y="731" width="33.900" height="34" rx="2" fill="none" stroke="#f08078" stroke-width="0.800" opacity="0.600"/>
<path d="M722.600 740 A9.400 9.400 0 1 0 732.200 740" fill="none" stroke="#fff" stroke-width="2.200" stroke-linecap="round"/>
<path d="M727.400 737 V747.400" stroke="#fff" stroke-width="2.200" stroke-linecap="round"/>
</g></g>
<g transform="translate(0,1535.500) scale(1,-1)"><g>
<g fill="url(#gCloud)"><ellipse cx="761" cy="743.500" rx="8" ry="6.500"/><ellipse cx="774.500" cy="740.500" rx="9.500" ry="8"/><ellipse cx="785.500" cy="746" rx="7.800" ry="6.500"/><ellipse cx="770" cy="749" rx="12" ry="6"/><ellipse cx="786" cy="753" rx="6" ry="3.500"/><ellipse cx="779" cy="750" rx="10" ry="5.500"/></g>
<path d="M757 748.500 q6 4 13 2 q6 3 12 0.500 q5 2 9 -1 q-2 5 -8 5 h-20 q-5 -1 -6 -6.500z" fill="#b0b0b0" opacity="0.550"/>
</g></g>
<g transform="translate(0,1535.500) scale(1,-1)"><g>
<path d="M806.400 747 q0 -3 3 -4 l3.500 -1 l3.500 15 l-3 1.500 q-3 0.500 -4.500 -2.500 q-2.500 -4 -2.500 -9z" fill="url(#gSpkB)"/>
<path d="M811.500 741 q2 -2 5 -3 l6 21 q-4 0 -6 -2 q-4 -5 -5 -16z" fill="url(#gSpkB)"/>
<ellipse cx="823.400" cy="748.600" rx="7.600" ry="17.300" transform="rotate(-14 823.400 748.600)" fill="#f0f0f0"/>
<ellipse cx="823.800" cy="748.800" rx="6.200" ry="15.600" transform="rotate(-14 823.800 748.800)" fill="url(#gSpkC)"/>
<ellipse cx="821" cy="748.600" rx="2.600" ry="3.600" transform="rotate(-14 821 748.600)" fill="#9a9c96"/>
</g></g>
<g transform="translate(0,1535.500) scale(1,-1)"><rect x="798.600" y="765" width="24" height="3" rx="1.500" fill="url(#gVol)"/></g>
</g>
</g>
<path d="M213 759.500 V746.500 H845.500" fill="none" stroke="#000008" stroke-width="1.600"/>
<path d="M213 759 L184 787" fill="none" stroke="#000008" stroke-width="2.200"/>
<path d="M845 746.500 L886.500 787" fill="none" stroke="#000008" stroke-width="2.100"/>
<rect x="186" y="785.700" width="699" height="1.300" fill="#c4d4e0"/>
<ellipse cx="245.500" cy="781" rx="7" ry="3.600" fill="url(#gGlow)"/>
<use href="#hammer" x="226.800" y="728.800" width="37.400" height="37.400"/>
<use href="#term" x="286.800" y="728.800" width="37.400" height="37.400"/>
<g>
<circle cx="353.500" cy="742.500" r="15" fill="url(#gGlobe)"/>
<path d="M344 731 q4 -3 8 -2 q-1 3 -4 5 q-3 0 -4 -3z M356 733 q5 -1 8 3 q2 5 0 9 q-4 -1 -5 -5 q-3 -3 -3 -7z M351 744 q4 0 5 4 q-3 2 -5 -1z" fill="#2a70c0" opacity="0.600"/>
<path d="M335 731.300 L337.500 735 Q341 732.500 347.500 732.200 L345.500 735.500 Q349 736.500 351 738.500 Q347.500 739.500 346 741 Q348 742 348.500 744 Q345 743.500 343.500 745.500 Q343 749 346 751 Q350 752.500 355.500 749.800 Q353 754 347.500 754 Q352 758.500 358.500 757.500 Q366 755 368 745 Q369 738 365 730 Q372.500 736 372 745 Q371.500 757 361 763.500 Q352 768 342 763 Q332 757 331.600 746 Q331.500 739 334 736 Q333.800 733 335 731.300 Z" fill="url(#gFox)"/>
<path d="M365 730 Q372.500 736 372 745 Q371.500 756 362 762.500 Q367 755 368 746 Q368.800 738 365 730z" fill="#fcc828" opacity="0.850"/>
<path d="M362.500 729.500 l3 1.500 l-1 2z M369.500 734 l2.500 1 l-1.500 2z" fill="#f8b020"/>
<path d="M338 735.500 Q341.500 733 347 732.600 L345 735.600 Q341.500 735 338 737z" fill="#fde0b0" opacity="0.550"/>
<path d="M333 752 Q338 764 352 765.600 Q340 766 334.500 758z" fill="#d84c0c" opacity="0.600"/>
</g>
<g><rect x="378.800" y="728.800" width="37.400" height="37.400" rx="3" fill="url(#gCalc)"/><rect x="378.800" y="763" width="37.400" height="3.200" rx="1.600" fill="#9c968c" opacity="0.700"/><rect x="383.600" y="732.200" width="27.600" height="8.800" rx="1" fill="#c3cb98" stroke="#8c9070" stroke-width="0.800"/><text x="409.500" y="740" font-size="8" font-family="DejaVu Sans Mono, Liberation Mono, monospace" fill="#4a5030" text-anchor="end">0</text><rect x="383.2" y="744.2" width="5.600" height="3.400" rx="0.600" fill="#3c3a38"/><rect x="385.0" y="745.2" width="2" height="1.400" fill="#fff" opacity="0.750"/><rect x="390.9" y="744.2" width="5.600" height="3.400" rx="0.600" fill="#3c3a38"/><rect x="392.7" y="745.2" width="2" height="1.400" fill="#fff" opacity="0.750"/><rect x="398.6" y="744.2" width="5.600" height="3.400" rx="0.600" fill="#3c3a38"/><rect x="400.4" y="745.2" width="2" height="1.400" fill="#fff" opacity="0.750"/><rect x="406.3" y="744.2" width="5.600" height="3.400" rx="0.600" fill="#c02828"/><rect x="408.1" y="745.2" width="2" height="1.400" fill="#fff" opacity="0.750"/><rect x="383.2" y="749.5" width="5.600" height="3.400" rx="0.600" fill="#3c3a38"/><rect x="385.0" y="750.5" width="2" height="1.400" fill="#fff" opacity="0.750"/><rect x="390.9" y="749.5" width="5.600" height="3.400" rx="0.600" fill="#3c3a38"/><rect x="392.7" y="750.5" width="2" height="1.400" fill="#fff" opacity="0.750"/><rect x="398.6" y="749.5" width="5.600" height="3.400" rx="0.600" fill="#3c3a38"/><rect x="400.4" y="750.5" width="2" height="1.400" fill="#fff" opacity="0.750"/><rect x="406.3" y="749.5" width="5.600" height="3.400" rx="0.600" fill="#8c7c6c"/><rect x="408.1" y="750.5" width="2" height="1.400" fill="#fff" opacity="0.750"/><rect x="383.2" y="754.8" width="5.600" height="3.400" rx="0.600" fill="#3c3a38"/><rect x="385.0" y="755.8" width="2" height="1.400" fill="#fff" opacity="0.750"/><rect x="390.9" y="754.8" width="5.600" height="3.400" rx="0.600" fill="#3c3a38"/><rect x="392.7" y="755.8" width="2" height="1.400" fill="#fff" opacity="0.750"/><rect x="398.6" y="754.8" width="5.600" height="3.400" rx="0.600" fill="#3c3a38"/><rect x="400.4" y="755.8" width="2" height="1.400" fill="#fff" opacity="0.750"/><rect x="406.3" y="754.8" width="5.600" height="3.400" rx="0.600" fill="#8c7c6c"/><rect x="408.1" y="755.8" width="2" height="1.400" fill="#fff" opacity="0.750"/><rect x="383.2" y="760.1" width="5.600" height="3.400" rx="0.600" fill="#3c3a38"/><rect x="385.0" y="761.1" width="2" height="1.400" fill="#fff" opacity="0.750"/><rect x="390.9" y="760.1" width="5.600" height="3.400" rx="0.600" fill="#8c7c6c"/><rect x="392.7" y="761.1" width="2" height="1.400" fill="#fff" opacity="0.750"/><rect x="398.6" y="760.1" width="5.600" height="3.400" rx="0.600" fill="#8c7c6c"/><rect x="400.4" y="761.1" width="2" height="1.400" fill="#fff" opacity="0.750"/><rect x="406.3" y="760.1" width="5.600" height="3.400" rx="0.600" fill="#f08820"/><rect x="408.1" y="761.1" width="2" height="1.400" fill="#fff" opacity="0.750"/></g>
<g>
<path d="M439 727.300 h20.500 q4 0 4 4 v14.500 q0 4 -4 4 h-3 l-3.500 4.200 v-4.200 h-14 q-4 0 -4 -4 v-14.500 q0 -4 4 -4z" fill="url(#gBubble)"/>
<path d="M431.500 735.500 q2 -2.500 6 -2.200 q-2 0.500 -2.500 2z" fill="#8a4aa0"/>
<path d="M438 733.600 q8.500 0 10.500 9 q0.800 5 -0.500 9 q-0.500 4 3 8 q2.500 2.500 2.800 5.400 h-30.300 q0.500 -4 2.500 -8 q2.500 -6 2 -12 q0.500 -11.400 10 -11.400z" fill="url(#gBird)" stroke="#6e3290" stroke-width="0.700"/>
<ellipse cx="436" cy="740.500" rx="6" ry="3.500" fill="#c8a0dc" opacity="0.350"/>
<circle cx="432.600" cy="745.400" r="3.100" fill="#fff"/><circle cx="445" cy="745.400" r="3.100" fill="#fff"/>
<circle cx="432.600" cy="745.600" r="1.300" fill="#6a2a88"/><circle cx="445" cy="745.600" r="1.300" fill="#6a2a88"/>
<path d="M433.200 750.400 l5.400 -1.400 l6.400 1.400 l-5 5.800z" fill="#f0a020"/><path d="M438.600 749 l6.400 1.400 l-5 5.800z" fill="#e08810"/>
</g>
<g>
<rect x="469.800" y="726.800" width="47.600" height="38" fill="#f2f2f2"/>
<rect x="469.800" y="762.800" width="47.600" height="2" fill="#cfcfcf"/>
<rect x="473" y="730" width="41.200" height="31.600" fill="url(#gDesk6)"/>
<path d="M473 730 h41.200 v8 q-22 6 -41.200 16z" fill="#fff" opacity="0.080"/>
<path d="M477.200 733 h7 l3 3 v8 h-10z M477.200 747.800 h7 l3 3 v8 h-10z" fill="#ececec"/>
<path d="M484.200 733 l3 3 h-3z M484.200 747.800 l3 3 h-3z" fill="#bcbcbc"/>
</g>
<g><clipPath id="cpw"><rect x="525" y="729" width="37.2" height="37" rx="2.500"/></clipPath><g clip-path="url(#cpw)"><path d="M543.4 746.8 Q535.5 731.7 541.0 712.9 L558.3 716.2 Q544.1 729.8 543.4 746.8z" fill="#f03838" stroke="#2a1a30" stroke-opacity="0.45" stroke-width="0.500"/><path d="M543.4 746.8 Q544.1 729.8 558.3 716.2 L571.6 727.8 Q552.5 732.4 543.4 746.8z" fill="#f66a28" stroke="#2a1a30" stroke-opacity="0.45" stroke-width="0.500"/><path d="M543.4 746.8 Q552.5 732.4 571.6 727.8 L577.3 744.4 Q558.5 738.9 543.4 746.8z" fill="#fa9a20" stroke="#2a1a30" stroke-opacity="0.45" stroke-width="0.500"/><path d="M543.4 746.8 Q558.5 738.9 577.3 744.4 L574.0 761.7 Q560.4 747.5 543.4 746.8z" fill="#fcd818" stroke="#2a1a30" stroke-opacity="0.45" stroke-width="0.500"/><path d="M543.4 746.8 Q560.4 747.5 574.0 761.7 L562.4 775.0 Q557.8 755.9 543.4 746.8z" fill="#d8e818" stroke="#2a1a30" stroke-opacity="0.45" stroke-width="0.500"/><path d="M543.4 746.8 Q557.8 755.9 562.4 775.0 L545.8 780.7 Q551.3 761.9 543.4 746.8z" fill="#7cd020" stroke="#2a1a30" stroke-opacity="0.45" stroke-width="0.500"/><path d="M543.4 746.8 Q551.3 761.9 545.8 780.7 L528.5 777.4 Q542.7 763.8 543.4 746.8z" fill="#20b838" stroke="#2a1a30" stroke-opacity="0.45" stroke-width="0.500"/><path d="M543.4 746.8 Q542.7 763.8 528.5 777.4 L515.2 765.8 Q534.3 761.2 543.4 746.8z" fill="#18b0c8" stroke="#2a1a30" stroke-opacity="0.45" stroke-width="0.500"/><path d="M543.4 746.8 Q534.3 761.2 515.2 765.8 L509.5 749.2 Q528.3 754.7 543.4 746.8z" fill="#2060e0" stroke="#2a1a30" stroke-opacity="0.45" stroke-width="0.500"/><path d="M543.4 746.8 Q528.3 754.7 509.5 749.2 L512.8 731.9 Q526.4 746.1 543.4 746.8z" fill="#3828b8" stroke="#2a1a30" stroke-opacity="0.45" stroke-width="0.500"/><path d="M543.4 746.8 Q526.4 746.1 512.8 731.9 L524.4 718.6 Q529.0 737.7 543.4 746.8z" fill="#7a28b0" stroke="#2a1a30" stroke-opacity="0.45" stroke-width="0.500"/><path d="M543.4 746.8 Q529.0 737.7 524.4 718.6 L541.0 712.9 Q535.5 731.7 543.4 746.8z" fill="#c038b0" stroke="#2a1a30" stroke-opacity="0.45" stroke-width="0.500"/><rect x="525" y="729" width="37.2" height="37" fill="url(#gWheelHi)"/></g></g>
<g>
<rect x="568.500" y="726" width="41.800" height="42" fill="#c4c8d2"/>
<rect x="570.400" y="728.200" width="38" height="37.800" fill="url(#gSw)"/>
<rect x="579.800" y="733" width="25.200" height="24" fill="#b89858"/>
<use href="#hammer" x="581.600" y="734.600" width="21.600" height="21"/>
</g>
<g><rect x="582.400" y="752" width="14.600" height="16.600" rx="4.500" fill="#2c2c30" opacity="0.900"/>
<text x="589.700" y="763.800" font-size="12.500" font-weight="bold" fill="#fff" text-anchor="middle" font-family="DejaVu Sans, Liberation Sans, sans-serif">1</text></g>
<g>
<path d="M616.400 735.200 q0 -2 2 -2 h12.600 q1.200 0 2 1 l1.800 2 h18.400 q1.800 0 1.800 1.800 v6 h-38.600z" fill="#f4f4f4"/>
<rect x="619" y="735" width="11" height="2" rx="0.800" fill="#f4ac48"/>
<rect x="615.400" y="740" width="40.600" height="25.800" rx="1.800" fill="url(#gOFolder)"/>
<path d="M615.400 741.800 q0 -1.800 1.800 -1.800 h37 q1.800 0 1.800 1.800 v8 q-20 2 -40.600 9z" fill="#fff" opacity="0.130"/>
<path d="M640.600 743.600 V765.400 L645.400 761 L648.600 768 L652 766.600 L648.800 759.600 L655.200 758.600 Z" fill="url(#gCur)" stroke="#8c8c8c" stroke-width="0.500"/>
</g>
<g>
<circle cx="681.100" cy="747.800" r="17.400" fill="url(#gPlayO)"/>
<circle cx="681.100" cy="747.800" r="16.800" fill="none" stroke="#2c5ca8" stroke-width="1" opacity="0.600"/>
<circle cx="681.100" cy="747.800" r="10.800" fill="url(#gPlayI)"/>
<path d="M677.700 741.700 V753.300 L687.700 747.500z" fill="#fff"/>
</g>
<g>
<rect x="710" y="730.500" width="34.900" height="35" rx="2.200" fill="url(#gPow)"/>
<rect x="710.500" y="731" width="33.900" height="34" rx="2" fill="none" stroke="#f08078" stroke-width="0.800" opacity="0.600"/>
<path d="M722.600 740 A9.400 9.400 0 1 0 732.200 740" fill="none" stroke="#fff" stroke-width="2.200" stroke-linecap="round"/>
<path d="M727.400 737 V747.400" stroke="#fff" stroke-width="2.200" stroke-linecap="round"/>
</g>
<g>
<g fill="url(#gCloud)"><ellipse cx="761" cy="743.500" rx="8" ry="6.500"/><ellipse cx="774.500" cy="740.500" rx="9.500" ry="8"/><ellipse cx="785.500" cy="746" rx="7.800" ry="6.500"/><ellipse cx="770" cy="749" rx="12" ry="6"/><ellipse cx="786" cy="753" rx="6" ry="3.500"/><ellipse cx="779" cy="750" rx="10" ry="5.500"/></g>
<path d="M757 748.500 q6 4 13 2 q6 3 12 0.500 q5 2 9 -1 q-2 5 -8 5 h-20 q-5 -1 -6 -6.500z" fill="#b0b0b0" opacity="0.550"/>
</g>
<g><rect x="760.300" y="751" width="26.800" height="17.600" rx="4.500" fill="#34343a" opacity="0.920"/>
<text x="773.700" y="764.300" font-size="12" font-weight="bold" fill="#fff" text-anchor="middle" font-family="DejaVu Sans, Liberation Sans, sans-serif">5°C</text></g>
<g>
<path d="M806.400 747 q0 -3 3 -4 l3.500 -1 l3.500 15 l-3 1.500 q-3 0.500 -4.500 -2.500 q-2.500 -4 -2.500 -9z" fill="url(#gSpkB)"/>
<path d="M811.500 741 q2 -2 5 -3 l6 21 q-4 0 -6 -2 q-4 -5 -5 -16z" fill="url(#gSpkB)"/>
<ellipse cx="823.400" cy="748.600" rx="7.600" ry="17.300" transform="rotate(-14 823.400 748.600)" fill="#f0f0f0"/>
<ellipse cx="823.800" cy="748.800" rx="6.200" ry="15.600" transform="rotate(-14 823.800 748.800)" fill="url(#gSpkC)"/>
<ellipse cx="821" cy="748.600" rx="2.600" ry="3.600" transform="rotate(-14 821 748.600)" fill="#9a9c96"/>
</g>
<rect x="798.600" y="765" width="24" height="3" rx="1.500" fill="url(#gVol)"/>
</svg>
</div></div>
<div class="abs" style="left:20px;top:19px;width:1px;height:769px;background:#e6e6e6"></div>
<div class="abs" style="left:20px;top:19px;width:1025px;height:1px;background:#c6c6c6"></div>
<div class="abs" style="left:1044px;top:20px;width:1px;height:767px;background:#00000a"></div>
<div class="abs" style="left:21px;top:786px;width:164px;height:1px;background:#00000a"></div>
<div class="abs" style="left:886px;top:786px;width:159px;height:1px;background:#00000a"></div>
<div class="abs" style="left:1045px;top:20px;width:1px;height:768px;background:#c2c2c2"></div>
<div class="abs" style="left:21px;top:787px;width:1025px;height:1px;background:#c2c2c2"></div>
</body>
</html>
